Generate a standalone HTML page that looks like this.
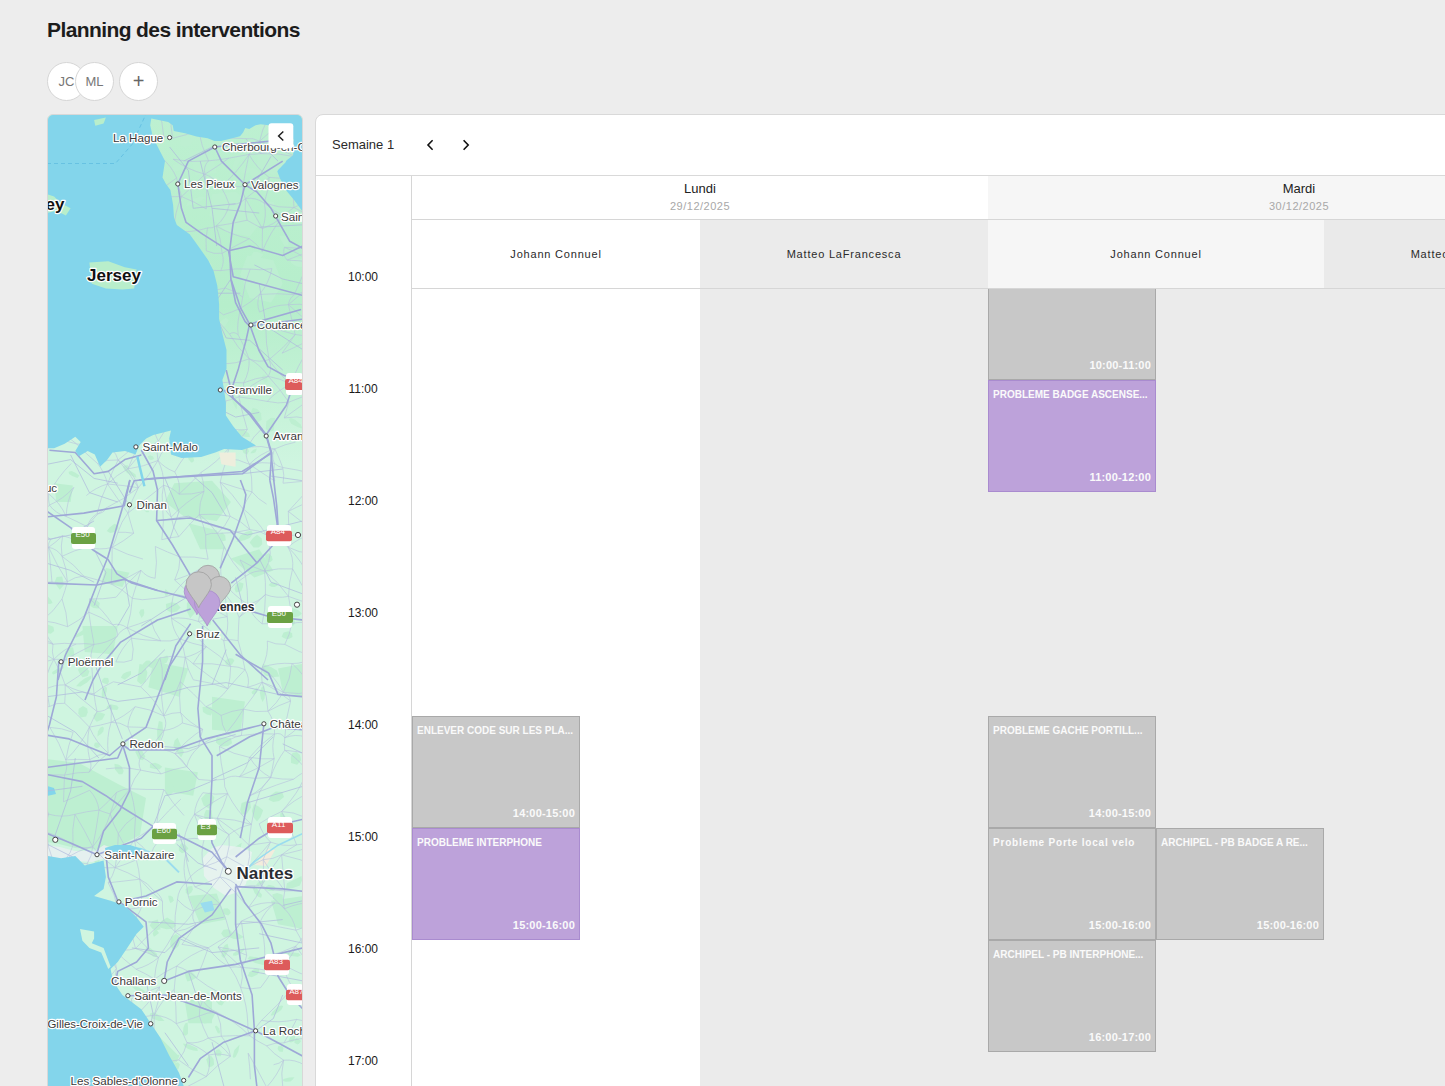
<!DOCTYPE html>
<html><head><meta charset="utf-8">
<style>
*{box-sizing:border-box;margin:0;padding:0}
html,body{width:1445px;height:1086px;overflow:hidden;background:#ededed;font-family:"Liberation Sans",sans-serif;color:#222}
.abs{position:absolute}
#title{left:47px;top:16px;font-size:21px;font-weight:700;letter-spacing:-0.6px;color:#1c1c1c;white-space:nowrap;line-height:28px}
.av{position:absolute;top:62px;width:39px;height:39px;border-radius:50%;background:#fff;border:1px solid #d6d6d6;font-size:13px;color:#777;text-align:center;line-height:37px}
#map{left:47px;top:114px;width:256px;height:990px;border-radius:6px;overflow:hidden;background:#c9f0db;border:1px solid #d8d8d8}
#card{left:315px;top:114px;width:1200px;height:1000px;background:#fff;border:1px solid #d9d9d9;border-radius:8px;overflow:hidden}
.t{position:absolute;white-space:nowrap}
.ev{position:absolute;border:1px solid #a9a9a9;background:#c8c8c8;color:#fafafa;font-weight:700}
.ev.p{background:#bda2da;border-color:#a98bcf}
.ev .n{position:absolute;left:4px;top:8px;font-size:10px;letter-spacing:0px;white-space:nowrap;line-height:11px}
.ev .h{position:absolute;right:4px;bottom:8px;font-size:11px;letter-spacing:0.2px;white-space:nowrap;line-height:12px}
</style></head><body>
<div id="title" class="abs">Planning des interventions</div>
<div class="av" style="left:47px">JC</div>
<div class="av" style="left:75px">ML</div>
<div class="av" style="left:119px;font-size:20px;color:#666">+</div>
<div id="map" class="abs">
<svg width="256" height="990" viewBox="0 0 256 990" style="position:absolute;left:-1px;top:-1px" font-family="Liberation Sans, sans-serif">
<rect width="256" height="990" fill="#cff5e0"/>
<defs><linearGradient id="cot" x1="0" y1="0" x2="0" y2="1"><stop offset="0" stop-color="#bdf0d1"/><stop offset="0.55" stop-color="#b6eecb"/><stop offset="1" stop-color="#cff5e0"/></linearGradient></defs>
<rect x="90" y="0" width="166" height="350" fill="url(#cot)"/>
<polygon points="165.0,80.2 188.6,77.8 202.7,89.6 212.2,110.8 202.7,122.6 179.2,117.9 162.7,101.4" fill="#bdefd1"/>
<polygon points="200.4,141.4 226.3,146.2 235.7,169.7 224.0,188.6 202.7,183.9 193.3,160.3" fill="#bdefd1"/>
<polygon points="132.0,132.0 150.9,132.0 165.0,150.9 150.9,165.0 136.7,153.2" fill="#bdefd1"/>
<polygon points="212.2,35.4 235.7,28.3 245.2,47.1 226.3,61.3 209.8,51.9" fill="#bdefd1"/>
<polygon points="141.4,35.4 165.0,40.1 169.7,58.9 148.5,61.3" fill="#bdefd1"/>
<polygon points="7.1,369.2 25.9,371.5 23.6,388.0 9.4,388.0" fill="#bdefd1"/>
<polygon points="127.3,369.2 165.0,366.8 183.9,388.0 169.7,406.9 136.7,402.2 117.9,388.0" fill="#bdefd1"/>
<polygon points="141.4,409.2 169.7,416.3 179.2,435.2 153.2,435.2" fill="#bdefd1"/>
<polygon points="58.9,454.0 82.5,458.7 75.4,472.9 54.2,468.2" fill="#bdefd1"/>
<polygon points="183.9,444.6 212.2,435.2 226.3,456.4 207.4,463.4" fill="#bdefd1"/>
<polygon points="35.4,256.0 94.3,256.0 99.0,270.1 47.1,274.9" fill="#bdefd1"/>
<polygon points="35.4,512.0 70.7,512.0 66.0,540.3 37.7,537.9" fill="#bdefd1"/>
<polygon points="106.1,547.4 141.4,554.4 132.0,582.7 101.4,573.3" fill="#bdefd1"/>
<polygon points="165.0,582.7 198.0,587.4 193.3,618.1 165.0,615.7" fill="#bdefd1"/>
<polygon points="14.1,677.0 58.9,674.7 77.8,700.6 70.7,724.2 23.6,724.2 9.4,700.6" fill="#bdefd1"/>
<polygon points="117.9,653.4 150.9,658.2 146.2,681.7 117.9,677.0" fill="#bdefd1"/>
<polygon points="231.0,554.4 256.0,549.7 256.0,582.7 235.7,578.0" fill="#bdefd1"/>
<polygon points="141.4,782.0 169.7,779.6 179.2,805.6 153.2,810.3" fill="#bdefd1"/>
<polygon points="136.7,881.0 165.0,885.7 165.0,909.3 141.4,909.3" fill="#bdefd1"/>
<polygon points="113.2,923.4 132.0,942.3 117.9,961.2 103.7,942.3" fill="#bdefd1"/>
<polygon points="224.0,786.7 256.0,782.0 256.0,815.0 231.0,810.3" fill="#bdefd1"/>
<polygon points="82.2,155.9 81.4,152.4 81.1,147.5 82.8,144.7 84.5,143.3 84.5,148.3 83.7,152.8" fill="#bdefd1"/>
<polygon points="106.9,822.7 105.7,819.8 106.7,816.9 108.9,814.2 110.3,816.8 112.0,819.0 109.6,821.0" fill="#bdefd1"/>
<polygon points="41.2,119.3 37.2,122.2 33.5,120.1 31.9,116.2 35.2,113.5 38.3,113.0 40.8,115.1" fill="#bdefd1"/>
<polygon points="174.8,427.5 170.8,427.4 169.3,422.8 172.1,419.9 175.5,418.5 178.2,421.6 178.8,426.4" fill="#bdefd1"/>
<polygon points="189.5,295.7 186.6,289.9 184.1,283.6 184.5,279.4 185.4,275.6 188.6,282.0 190.1,290.6" fill="#bdefd1"/>
<polygon points="222.3,317.7 218.7,315.1 219.4,307.2 224.0,303.7 228.0,303.9 227.4,310.2 226.5,316.7" fill="#bdefd1"/>
<polygon points="168.9,991.8 165.4,987.2 162.4,982.5 162.6,977.9 164.6,977.5 167.2,981.2 170.4,987.9" fill="#bdefd1"/>
<polygon points="38.1,246.4 35.3,250.3 30.0,251.3 26.8,246.5 28.1,240.8 33.3,240.4 37.2,241.9" fill="#bdefd1"/>
<polygon points="98.4,879.4 95.1,879.2 88.9,876.2 83.7,871.6 86.2,870.8 91.5,873.2 97.5,876.7" fill="#bdefd1"/>
<polygon points="94.0,570.6 90.1,566.9 91.3,559.0 92.5,550.1 97.4,551.0 100.4,558.4 98.6,567.8" fill="#bdefd1"/>
<polygon points="102.8,395.5 101.6,398.2 99.2,398.3 97.4,396.2 98.6,393.2 100.5,391.9 102.6,392.6" fill="#bdefd1"/>
<polygon points="25.2,362.0 22.0,360.1 21.6,357.7 24.7,357.0 28.4,358.8 32.4,361.6 30.5,364.1" fill="#bdefd1"/>
<polygon points="120.6,481.4 118.6,482.1 117.5,479.3 117.7,477.5 118.6,475.1 120.9,477.3 121.2,479.7" fill="#bdefd1"/>
<polygon points="132.6,29.7 134.3,24.5 138.0,21.3 142.3,23.0 146.4,26.8 142.9,31.6 137.1,33.7" fill="#bdefd1"/>
<polygon points="75.5,225.2 76.3,218.5 83.3,213.8 89.0,216.1 92.4,219.8 88.3,224.9 82.6,225.4" fill="#bdefd1"/>
<polygon points="2.9,277.2 3.0,272.4 7.6,270.4 11.9,273.3 11.0,278.0 8.5,280.3 5.3,280.0" fill="#bdefd1"/>
<polygon points="44.3,205.6 43.8,200.4 48.8,195.7 53.6,198.5 57.7,201.4 55.4,207.5 48.4,209.4" fill="#bdefd1"/>
<polygon points="194.3,477.2 189.0,478.6 187.5,474.9 188.6,471.5 192.3,467.9 196.5,469.5 195.8,473.3" fill="#bdefd1"/>
<polygon points="42.2,154.4 36.7,157.7 28.1,153.7 25.0,148.3 26.1,143.8 32.9,145.4 37.3,148.8" fill="#bdefd1"/>
<polygon points="250.2,650.8 244.1,649.0 243.8,643.0 245.5,638.9 249.7,637.9 253.0,641.0 254.1,646.2" fill="#bdefd1"/>
<polygon points="67.9,417.9 63.2,419.0 59.7,417.0 62.9,413.2 67.4,409.8 71.1,411.6 71.5,414.8" fill="#bdefd1"/>
<polygon points="140.8,18.6 136.8,20.1 132.7,20.9 128.1,19.7 128.7,17.3 132.9,16.3 137.6,16.5" fill="#bdefd1"/>
<polygon points="144.3,778.5 141.2,780.9 138.8,778.8 138.6,775.6 141.2,772.4 145.2,772.1 145.9,775.6" fill="#bdefd1"/>
<polygon points="157.8,506.8 153.7,504.8 150.7,499.6 153.6,494.6 158.3,493.3 162.4,497.9 160.4,503.3" fill="#bdefd1"/>
<polygon points="150.8,936.9 146.3,936.5 141.1,935.0 137.8,932.4 135.8,929.6 142.2,930.5 150.2,934.2" fill="#bdefd1"/>
<polygon points="30.8,712.3 35.5,708.9 40.4,705.4 44.9,705.9 45.9,707.6 42.6,711.0 35.2,713.0" fill="#bdefd1"/>
<polygon points="45.8,430.4 43.3,432.1 39.3,428.4 35.8,425.0 37.7,423.0 41.8,424.9 45.5,427.4" fill="#bdefd1"/>
<polygon points="156.6,509.6 156.4,505.2 157.1,502.8 160.1,504.5 164.2,507.6 163.3,510.8 160.8,510.9" fill="#bdefd1"/>
<polygon points="117.5,907.1 111.9,906.9 104.8,904.2 102.7,900.6 103.7,899.0 107.7,898.6 113.5,902.6" fill="#bdefd1"/>
<polygon points="26.9,931.2 20.9,932.7 15.0,934.5 12.0,929.5 13.5,925.5 18.3,923.4 25.3,925.4" fill="#bdefd1"/>
<polygon points="73.3,129.6 70.7,130.4 66.8,129.6 63.5,127.2 64.2,125.2 68.1,124.4 72.4,127.3" fill="#bdefd1"/>
<polygon points="130.5,178.6 129.4,179.8 125.9,176.6 125.0,174.0 125.4,172.4 128.6,173.5 130.5,177.0" fill="#bdefd1"/>
<polygon points="211.7,433.6 206.6,433.4 202.6,428.5 206.0,423.9 210.1,420.7 214.8,424.4 215.3,430.2" fill="#bdefd1"/>
<polygon points="107.0,344.8 104.8,345.9 102.7,345.7 101.5,344.4 100.7,342.2 103.4,341.2 106.1,342.6" fill="#bdefd1"/>
<polygon points="76.2,241.9 73.2,243.2 68.7,243.3 66.4,239.1 69.2,236.3 72.9,236.7 77.3,238.2" fill="#bdefd1"/>
<polygon points="79.5,355.6 77.2,354.5 75.9,352.7 78.1,351.5 80.3,350.9 81.7,352.4 81.9,354.4" fill="#bdefd1"/>
<polygon points="9.4,26.9 7.3,24.9 8.1,20.4 10.6,17.2 13.5,17.6 13.3,22.0 11.8,25.3" fill="#bdefd1"/>
<polygon points="261.3,149.2 257.4,153.2 249.6,152.5 243.9,149.1 244.2,144.5 251.3,144.4 257.4,145.0" fill="#bdefd1"/>
<polygon points="126.4,836.5 123.1,830.9 124.0,823.1 128.9,820.1 132.1,822.0 133.4,826.3 131.6,832.1" fill="#bdefd1"/>
<polygon points="24.0,834.2 22.1,829.8 24.5,825.4 27.4,820.1 31.6,822.1 31.5,827.8 28.6,832.7" fill="#bdefd1"/>
<polygon points="175.2,66.9 173.6,69.2 166.9,67.3 160.6,64.9 160.3,61.7 167.7,62.3 173.6,64.4" fill="#bdefd1"/>
<polygon points="120.1,682.1 118.5,679.2 120.0,673.9 124.2,668.4 126.9,671.9 127.5,677.1 123.3,681.0" fill="#bdefd1"/>
<polygon points="12.2,271.5 9.9,268.0 12.5,262.3 17.2,259.5 19.5,262.6 21.5,267.4 16.2,270.8" fill="#bdefd1"/>
<polygon points="247.4,928.8 247.5,925.4 249.2,924.0 251.4,924.7 254.2,927.0 252.4,929.2 250.5,930.5" fill="#bdefd1"/>
<polygon points="28.4,523.8 29.0,520.8 36.9,515.4 41.7,514.4 45.8,514.3 39.2,519.6 33.5,522.1" fill="#bdefd1"/>
<polygon points="5.6,489.0 2.9,490.1 -2.0,489.4 -2.7,486.1 -3.9,482.8 1.1,482.8 4.2,486.3" fill="#bdefd1"/>
<polygon points="240.4,713.6 237.2,713.8 233.5,705.2 233.2,699.6 235.3,698.3 238.8,703.3 240.3,708.9" fill="#bdefd1"/>
<polygon points="28.8,829.1 24.8,831.6 22.2,829.0 21.7,825.3 24.5,820.2 30.1,820.4 32.3,824.9" fill="#bdefd1"/>
<polygon points="157.3,909.4 154.5,907.0 159.7,900.3 166.0,895.5 168.8,898.6 165.3,905.2 160.7,908.9" fill="#bdefd1"/>
<polygon points="241.3,131.5 237.4,131.9 234.4,126.7 232.5,122.2 235.5,121.5 239.1,123.0 241.2,127.4" fill="#bdefd1"/>
<polygon points="42.9,163.4 37.3,163.3 35.5,158.9 40.4,156.5 44.7,157.2 47.3,159.3 46.2,161.9" fill="#bdefd1"/>
<polygon points="86.4,95.4 84.3,92.6 85.1,88.7 87.2,86.4 89.6,86.6 90.3,89.9 89.0,93.0" fill="#bdefd1"/>
<polygon points="15.8,284.9 13.6,281.9 14.1,273.0 15.1,267.5 16.8,267.6 18.0,272.8 17.6,280.4" fill="#bdefd1"/>
<polygon points="254.0,841.2 250.8,842.7 242.1,841.8 235.9,840.2 238.9,839.1 242.6,838.3 251.3,839.1" fill="#bdefd1"/>
<polygon points="218.3,849.4 216.2,851.0 208.1,849.0 200.6,844.7 202.7,842.3 210.2,843.3 218.7,846.8" fill="#bdefd1"/>
<polygon points="119.8,548.4 115.6,550.6 113.7,548.9 114.4,545.9 116.7,543.1 120.2,541.4 121.6,544.0" fill="#bdefd1"/>
<polygon points="30.5,74.5 26.8,74.8 25.6,69.7 25.5,65.5 28.5,63.8 33.2,66.1 33.6,72.4" fill="#bdefd1"/>
<polygon points="221.5,471.1 223.7,468.9 226.7,468.6 229.9,468.9 230.6,471.4 227.5,473.0 224.2,472.7" fill="#bdefd1"/>
<polygon points="172.8,919.4 170.8,919.3 169.2,916.0 167.8,912.5 169.5,911.6 172.0,914.2 172.9,917.2" fill="#bdefd1"/>
<polygon points="255.8,314.8 250.6,313.0 244.2,309.7 241.7,304.7 244.3,304.0 248.5,305.9 253.4,310.2" fill="#bdefd1"/>
<polygon points="174.0,942.2 170.4,942.0 168.4,940.8 167.8,938.7 168.8,936.3 172.1,935.3 174.6,938.4" fill="#bdefd1"/>
<polygon points="197.3,994.0 191.5,993.6 185.2,988.6 179.1,983.8 181.9,982.3 187.6,984.1 193.1,988.5" fill="#bdefd1"/>
<polygon points="39.9,3.3 39.2,0.1 43.8,0.1 46.9,1.0 48.5,3.8 45.1,6.5 41.0,5.7" fill="#bdefd1"/>
<polygon points="16.5,471.5 12.7,475.7 9.7,471.5 7.6,468.1 9.7,463.1 15.2,462.6 16.3,467.4" fill="#bdefd1"/>
<polygon points="1.0,70.0 3.9,64.2 8.4,59.0 15.2,53.3 16.0,56.6 11.8,62.4 6.2,68.3" fill="#bdefd1"/>
<polygon points="78.2,273.6 77.7,268.5 80.5,269.4 82.5,270.6 83.9,274.3 83.4,278.8 80.3,278.3" fill="#bdefd1"/>
<polygon points="94.6,249.5 94.1,245.9 99.4,243.9 104.4,245.2 105.2,249.1 101.2,252.2 96.5,251.9" fill="#bdefd1"/>
<polygon points="89.4,363.7 84.5,361.8 79.9,358.7 77.2,355.8 76.2,353.1 81.6,355.8 88.4,360.3" fill="#bdefd1"/>
<polygon points="230.4,979.3 228.6,980.7 224.7,979.6 222.7,977.7 222.8,976.0 225.8,975.5 229.7,977.1" fill="#bdefd1"/>
<polygon points="185.9,841.6 186.4,839.2 191.8,836.0 197.6,833.9 196.5,836.7 193.6,839.5 188.9,841.7" fill="#bdefd1"/>
<polygon points="42.1,883.6 38.2,880.1 36.4,875.0 35.4,869.1 38.6,868.6 42.5,872.2 42.0,877.7" fill="#bdefd1"/>
<polygon points="128.9,811.8 125.1,814.8 119.5,815.2 111.3,812.9 113.9,807.3 120.1,803.5 126.9,807.4" fill="#bdefd1"/>
<polygon points="218.4,445.2 218.1,440.9 221.9,439.1 224.7,442.3 225.7,446.0 223.1,448.3 220.1,448.2" fill="#bdefd1"/>
<polygon points="71.7,593.7 70.2,595.9 63.9,595.4 59.5,594.2 60.0,592.3 63.5,590.3 69.9,591.5" fill="#bdefd1"/>
<polygon points="14.5,104.0 12.8,101.7 12.6,97.2 16.6,95.5 19.4,97.2 19.9,100.9 18.2,106.1" fill="#bdefd1"/>
<polygon points="73.8,563.6 76.2,559.7 79.6,557.9 84.0,557.1 83.9,560.4 81.7,562.7 77.8,565.7" fill="#bdefd1"/>
<polygon points="109.0,816.4 105.7,814.9 102.7,811.6 105.2,807.2 110.8,805.6 112.4,810.8 113.6,815.2" fill="#bdefd1"/>
<polygon points="94.6,504.0 93.1,501.0 92.1,498.4 93.7,495.4 96.9,495.3 97.3,498.9 96.6,501.3" fill="#bdefd1"/>
<polygon points="236.0,967.1 236.4,965.0 242.3,963.4 247.5,963.3 245.7,965.5 243.5,967.6 238.7,967.7" fill="#bdefd1"/>
<polygon points="109.7,842.9 106.4,842.8 100.7,838.6 98.5,834.9 99.2,833.1 103.7,834.3 110.2,840.1" fill="#bdefd1"/>
<polygon points="5.3,559.7 5.2,557.9 11.2,554.2 16.8,552.2 16.4,554.3 12.8,557.5 6.7,560.6" fill="#bdefd1"/>
<polygon points="115.2,652.7 112.3,655.4 107.7,655.1 102.8,653.7 103.0,649.9 108.0,648.7 112.0,650.2" fill="#bdefd1"/>
<polygon points="124.4,107.0 122.5,109.4 119.9,108.3 117.4,106.7 119.2,104.2 121.4,101.9 124.6,103.5" fill="#bdefd1"/>
<polygon points="126.3,54.5 125.8,51.2 132.0,49.1 137.0,51.1 137.8,54.4 132.4,56.2 126.5,57.9" fill="#bdefd1"/>
<polygon points="116.9,954.2 121.8,948.5 126.0,944.2 132.6,940.3 131.5,943.8 129.8,947.9 123.1,951.4" fill="#bdefd1"/>
<polygon points="212.9,145.3 209.1,148.1 204.8,145.4 204.6,141.2 206.5,137.9 210.6,138.0 216.2,140.5" fill="#bdefd1"/>
<polygon points="177.6,887.8 174.9,891.5 171.6,890.5 169.1,887.6 171.5,883.0 175.0,881.2 178.5,882.8" fill="#bdefd1"/>
<polygon points="22.0,986.6 20.1,983.6 26.0,979.2 30.6,978.5 33.8,980.1 29.9,984.8 25.3,986.8" fill="#bdefd1"/>
<polygon points="185.7,57.7 185.9,51.8 188.4,44.6 192.2,41.3 193.3,43.5 192.7,47.5 190.2,52.2" fill="#bdefd1"/>
<polygon points="162.4,430.0 159.6,434.1 155.3,431.1 153.5,427.9 154.0,423.8 158.4,423.7 162.6,425.6" fill="#bdefd1"/>
<polygon points="54.9,583.9 54.7,580.1 55.1,574.7 58.5,572.7 60.0,573.7 59.6,577.4 57.8,582.8" fill="#bdefd1"/>
<polygon points="229.0,774.5 226.5,776.8 221.9,776.9 217.7,775.5 218.4,772.9 221.6,770.7 227.0,771.9" fill="#bdefd1"/>
<polygon points="64.3,896.8 61.8,896.4 58.9,895.1 61.9,893.1 64.6,891.3 68.2,892.2 66.4,895.1" fill="#bdefd1"/>
<polygon points="47.0,604.7 46.5,601.3 49.9,598.1 53.6,598.6 58.2,600.2 55.3,605.5 49.7,607.8" fill="#bdefd1"/>
<polygon points="-3.6,841.5 -2.9,837.2 0.5,833.1 4.7,830.8 5.9,833.2 5.1,837.1 0.2,842.4" fill="#bdefd1"/>
<polygon points="176.7,844.1 174.4,842.0 175.4,834.7 177.9,830.9 180.6,829.8 181.9,835.3 179.1,841.0" fill="#bdefd1"/>
<polygon points="221.3,19.2 221.3,15.6 224.2,12.8 227.7,10.5 228.5,13.2 227.5,16.1 224.8,19.5" fill="#bdefd1"/>
<polygon points="162.3,694.7 156.7,691.5 154.1,684.6 158.4,679.9 163.7,678.2 167.4,683.6 166.0,689.5" fill="#bdefd1"/>
<polygon points="56.3,617.4 54.1,620.1 50.3,622.4 51.0,617.3 53.1,613.7 55.5,612.6 56.9,614.1" fill="#bdefd1"/>
<polygon points="185.1,629.2 180.8,631.9 174.2,632.8 168.8,628.4 169.6,623.2 176.8,623.8 183.9,624.0" fill="#bdefd1"/>
<polygon points="236.3,935.7 235.6,938.1 232.2,937.5 230.6,934.9 231.1,932.3 234.3,932.0 236.4,933.8" fill="#bdefd1"/>
<polygon points="29.6,103.2 26.2,100.6 22.9,96.8 21.4,92.2 22.3,89.3 26.7,94.2 29.5,99.6" fill="#bdefd1"/>
<polygon points="254.9,499.5 251.6,502.5 244.1,503.5 239.7,499.8 238.3,495.7 245.3,494.1 251.4,496.3" fill="#bdefd1"/>
<polygon points="227.5,90.0 226.8,92.3 218.3,93.1 215.5,90.7 213.2,88.9 218.9,87.6 226.9,87.7" fill="#bdefd1"/>
<polygon points="51.7,494.4 46.4,494.1 43.5,491.9 41.8,487.7 45.8,484.7 49.6,486.3 52.9,489.0" fill="#bdefd1"/>
<polygon points="18.0,786.3 15.5,782.6 17.0,776.8 21.4,771.2 24.2,776.1 27.3,780.6 22.0,784.2" fill="#bdefd1"/>
<polygon points="56.9,270.9 52.1,265.8 48.6,260.2 48.1,253.6 51.2,251.2 56.1,256.8 58.1,265.0" fill="#bdefd1"/>
<polygon points="87.1,327.1 85.4,323.4 85.1,320.2 88.7,318.6 93.1,321.5 93.1,324.8 91.7,327.4" fill="#bdefd1"/>
<polygon points="223.7,239.4 223.9,236.0 225.1,233.6 227.5,232.5 229.4,233.7 229.6,236.6 226.9,238.2" fill="#bdefd1"/>
<polygon points="95.6,191.2 87.3,191.5 80.7,191.0 72.6,186.5 75.2,181.8 83.4,181.4 90.5,185.6" fill="#bdefd1"/>
<polygon points="51.0,633.8 49.1,634.1 47.0,631.8 47.8,628.8 50.3,628.4 52.6,629.9 52.8,632.8" fill="#bdefd1"/>
<polygon points="31.3,599.2 31.7,594.8 36.0,591.9 40.2,594.4 40.7,598.2 39.2,602.6 33.6,603.5" fill="#bdefd1"/>
<polygon points="194.6,700.6 193.2,695.9 194.6,689.1 199.3,687.2 203.1,687.3 204.0,693.4 199.3,700.4" fill="#bdefd1"/>
<polygon points="159.2,252.5 156.7,249.9 157.5,244.4 161.5,243.3 164.9,243.1 165.7,247.8 162.5,251.6" fill="#bdefd1"/>
<polygon points="128.4,966.5 125.4,969.6 122.9,968.1 123.0,965.1 123.9,961.9 126.8,960.9 129.0,962.7" fill="#bdefd1"/>
<polygon points="134.1,643.2 129.8,637.7 126.3,632.1 127.6,626.5 130.6,623.8 133.6,630.7 137.0,638.3" fill="#bdefd1"/>
<polygon points="95.3,56.2 93.6,58.8 89.7,59.8 87.2,57.3 87.6,54.6 90.3,53.2 94.4,53.0" fill="#bdefd1"/>
<polygon points="241.8,525.0 238.3,524.7 234.6,522.8 236.6,518.5 241.6,517.2 245.1,519.3 245.5,522.9" fill="#bdefd1"/>
<polygon points="52.7,957.5 53.4,953.0 56.6,950.4 60.7,950.0 61.6,953.6 61.9,958.0 57.2,958.5" fill="#bdefd1"/>
<polygon points="218.7,268.9 216.8,267.3 214.4,264.2 215.8,261.0 217.9,260.6 219.9,263.2 220.7,267.4" fill="#bdefd1"/>
<polygon points="101.1,632.9 106.1,629.8 110.7,626.7 117.3,627.3 117.6,630.9 111.5,633.1 105.1,635.2" fill="#bdefd1"/>
<polygon points="161.0,16.8 158.4,14.3 158.4,12.3 161.2,12.0 166.1,13.7 166.9,16.8 164.7,17.7" fill="#bdefd1"/>
<polygon points="230.0,788.0 226.0,784.6 225.3,780.5 230.1,779.0 235.6,780.8 235.9,784.6 235.2,787.9" fill="#bdefd1"/>
<polygon points="135.0,739.3 131.8,736.8 131.9,732.8 134.4,729.0 138.3,731.1 141.4,734.2 138.8,737.8" fill="#bdefd1"/>
<polygon points="133.6,493.4 129.6,497.5 124.2,498.8 119.4,495.7 118.9,490.1 124.6,488.2 129.7,489.2" fill="#bdefd1"/>
<polygon points="253.5,75.3 250.5,79.0 243.4,80.1 240.1,75.9 237.9,71.3 244.7,70.1 250.6,71.5" fill="#bdefd1"/>
<polygon points="234.3,41.8 229.1,38.9 225.2,34.2 224.6,28.4 227.8,25.4 232.2,30.6 234.9,35.9" fill="#bdefd1"/>
<polygon points="101.4,552.6 102.4,549.2 108.2,545.5 114.0,543.4 117.4,544.9 111.6,550.2 104.3,554.1" fill="#bdefd1"/>
<polygon points="82.4,319.0 81.7,314.8 80.8,310.9 84.8,308.2 88.3,310.7 87.8,314.5 86.3,317.5" fill="#bdefd1"/>
<polygon points="-3.5,197.5 -5.6,192.2 -1.4,183.9 4.0,179.3 7.6,181.3 6.9,188.3 1.9,195.1" fill="#bdefd1"/>
<polygon points="170.3,214.1 170.1,211.1 173.4,207.7 178.7,203.7 181.8,206.3 178.4,212.1 173.1,215.2" fill="#bdefd1"/>
<polygon points="214.2,783.7 211.1,782.8 207.6,779.1 205.7,774.2 207.5,771.6 211.6,776.6 215.0,780.8" fill="#bdefd1"/>
<polygon points="2.3,119.7 6.0,116.3 10.8,113.5 17.2,113.8 19.9,117.5 13.8,122.3 6.0,122.1" fill="#bdefd1"/>
<polygon points="110.0,103.3 107.6,103.7 102.7,102.8 100.8,99.6 98.9,95.9 105.4,98.8 111.6,101.2" fill="#bdefd1"/>
<polygon points="28.9,22.2 29.6,19.1 32.0,14.0 37.2,10.9 39.8,12.3 36.7,18.2 31.9,21.3" fill="#bdefd1"/>
<polygon points="166.2,707.6 160.1,708.7 157.5,704.2 157.1,700.7 158.9,696.1 164.7,696.3 165.2,701.7" fill="#bdefd1"/>
<polygon points="79.7,724.9 75.8,724.5 74.0,721.5 77.2,719.0 82.1,718.2 83.8,721.3 84.9,724.7" fill="#bdefd1"/>
<polygon points="95.9,646.2 91.6,645.0 88.5,638.2 89.2,632.8 92.3,632.8 95.0,636.5 98.4,642.5" fill="#bdefd1"/>
<polygon points="174.1,819.6 176.5,815.7 180.7,815.3 184.2,817.0 185.7,821.1 181.3,823.0 176.9,823.2" fill="#bdefd1"/>
<polygon points="161.1,887.2 159.0,889.4 152.1,890.2 145.1,888.7 144.8,885.5 152.8,885.1 160.3,884.4" fill="#bdefd1"/>
<polygon points="200.7,862.1 202.5,858.3 207.8,854.5 212.1,855.1 212.2,857.4 210.5,860.5 204.7,863.2" fill="#bdefd1"/>
<polygon points="48.0,752.3 47.5,747.3 49.8,740.4 52.6,735.8 55.8,734.1 55.1,741.5 51.5,748.6" fill="#bdefd1"/>
<polygon points="20.0,808.2 18.3,803.9 20.2,796.1 23.1,791.3 25.6,791.4 24.9,797.7 23.1,802.9" fill="#bdefd1"/>
<polygon points="47.8,699.0 44.6,697.2 43.2,694.2 42.1,689.0 46.6,689.5 48.9,692.3 50.7,696.3" fill="#bdefd1"/>
<polygon points="201.3,159.3 199.6,157.5 197.5,152.4 200.3,147.0 203.3,148.6 205.0,153.2 203.5,158.3" fill="#bdefd1"/>
<polygon points="189.4,428.1 193.5,421.5 198.8,417.9 204.2,416.5 206.0,419.6 202.7,424.0 197.5,426.3" fill="#bdefd1"/>
<polygon points="138.6,863.1 137.6,858.3 142.4,856.5 146.0,859.0 150.1,863.2 145.1,866.3 140.4,867.6" fill="#bdefd1"/>
<polygon points="164.9,952.5 161.5,953.2 159.3,945.5 161.9,941.7 164.3,942.1 166.6,945.0 167.1,950.5" fill="#bdefd1"/>
<polygon points="223.6,901.5 225.5,897.8 231.5,892.0 235.0,891.6 236.2,892.3 234.2,895.9 227.0,901.3" fill="#bdefd1"/>
<polygon points="179.0,297.8 175.6,300.1 171.0,299.0 166.9,295.9 169.3,292.6 173.4,291.5 177.4,294.0" fill="#bdefd1"/>
<polygon points="183.1,13.6 177.2,14.6 171.0,15.5 164.9,12.9 165.1,10.1 172.4,10.4 178.3,11.1" fill="#bdefd1"/>
<polygon points="26.0,927.1 21.6,926.4 20.3,918.3 21.5,911.6 25.4,913.4 28.2,917.4 27.9,922.9" fill="#bdefd1"/>
<polygon points="185.0,550.4 181.4,551.4 178.8,550.4 177.9,546.8 182.4,544.2 185.5,544.5 187.4,546.6" fill="#bdefd1"/>
<polygon points="85.6,894.9 82.8,899.7 80.0,898.8 78.0,896.1 79.2,891.4 81.7,889.1 83.8,890.7" fill="#bdefd1"/>
<polygon points="101.2,983.6 98.7,988.8 90.6,984.5 83.0,980.9 86.7,976.8 92.8,973.3 98.2,979.4" fill="#bdefd1"/>
<polygon points="203.4,339.3 204.5,337.5 206.4,335.7 209.7,334.6 209.2,336.7 208.2,338.6 205.6,339.3" fill="#bdefd1"/>
<polygon points="51.6,764.1 50.5,766.1 43.9,764.8 40.2,762.2 40.9,760.5 45.0,759.7 51.9,761.8" fill="#bdefd1"/>
<polygon points="205.2,579.9 204.5,578.0 207.1,575.7 209.9,573.2 210.5,575.2 210.3,577.9 207.2,580.7" fill="#bdefd1"/>
<polygon points="119.1,18.3 121.1,14.8 126.7,10.2 132.5,11.0 132.6,14.0 129.3,17.7 122.0,20.5" fill="#bdefd1"/>
<polygon points="7.2,517.0 3.8,519.7 -2.1,518.5 -3.7,514.4 -3.5,510.6 1.4,510.8 6.4,512.8" fill="#bdefd1"/>
<polygon points="15.3,873.5 12.3,869.9 13.1,862.5 13.9,853.1 17.4,857.2 18.8,862.5 17.8,868.5" fill="#bdefd1"/>
<polygon points="62.8,810.8 62.4,809.3 62.7,807.1 64.9,806.2 66.4,807.4 66.5,809.8 64.4,810.8" fill="#bdefd1"/>
<polygon points="222.7,712.9 221.1,711.5 220.9,709.5 221.6,707.5 223.3,707.9 224.9,709.2 224.8,712.1" fill="#bdefd1"/>
<polygon points="29.1,572.3 32.9,567.9 37.9,564.3 44.3,561.5 44.4,564.3 40.3,568.2 33.6,572.5" fill="#bdefd1"/>
<polygon points="200.0,340.7 196.6,338.9 194.8,334.8 196.3,330.9 199.6,330.2 201.0,334.0 201.9,337.3" fill="#bdefd1"/>
<polygon points="243.6,928.6 241.5,926.4 243.2,923.3 245.4,920.9 248.2,922.0 247.7,925.4 246.3,927.8" fill="#bdefd1"/>
<polygon points="238.8,775.2 239.9,769.2 247.7,765.4 254.5,762.0 255.0,766.2 252.9,771.6 245.9,774.1" fill="#bdefd1"/>
<polygon points="138.4,921.8 135.6,920.5 136.5,913.6 138.1,909.6 140.6,908.4 141.0,914.1 140.9,919.9" fill="#bdefd1"/>
<polygon points="244.4,512.1 242.3,510.5 242.0,507.6 243.7,505.0 246.7,505.0 248.0,508.1 247.0,511.2" fill="#bdefd1"/>
<polygon points="20.5,549.9 18.8,544.4 18.2,537.7 22.3,533.2 26.1,533.6 27.4,539.9 24.7,546.7" fill="#bdefd1"/>
<polygon points="81.1,243.9 78.1,242.3 75.9,240.3 75.8,236.3 79.7,236.4 82.9,237.5 83.3,241.1" fill="#bdefd1"/>
<polygon points="75.9,979.3 73.7,983.7 69.7,981.4 69.5,977.6 70.4,973.9 74.3,972.9 78.1,975.2" fill="#bdefd1"/>
<polygon points="35.4,226.8 31.0,228.5 23.4,226.6 18.9,220.8 20.1,215.8 28.5,216.6 35.0,222.2" fill="#bdefd1"/>
<polygon points="182.1,741.5 181.9,736.8 188.4,732.8 194.7,728.7 193.7,733.7 193.5,738.0 187.0,741.6" fill="#bdefd1"/>
<polygon points="121.1,958.3 122.1,953.6 126.5,949.8 131.0,948.3 132.9,950.6 131.3,955.2 126.2,957.3" fill="#bdefd1"/>
<polygon points="94.9,553.8 95.9,549.9 99.1,546.8 102.3,546.6 104.1,548.1 102.2,551.1 98.9,554.0" fill="#bdefd1"/>
<polygon points="139.2,92.2 141.0,87.7 149.1,84.1 155.1,82.2 158.8,83.7 151.1,88.3 146.2,90.5" fill="#bdefd1"/>
<polygon points="143.2,504.2 139.9,497.5 139.8,489.7 143.3,483.0 147.6,485.1 149.4,491.1 148.1,498.8" fill="#bdefd1"/>
<polygon points="96.3,940.5 93.1,942.6 87.0,941.8 82.7,938.0 82.7,933.8 89.4,932.9 95.2,936.8" fill="#bdefd1"/>
<polygon points="111.6,629.8 110.2,622.9 110.1,616.2 111.9,607.0 115.4,608.1 116.1,616.5 114.2,623.0" fill="#bdefd1"/>
<polygon points="221.5,685.7 223.9,680.9 228.7,677.6 235.2,677.9 237.0,682.9 232.0,686.9 226.4,688.0" fill="#bdefd1"/>
<polygon points="159.8,600.4 156.0,598.0 155.5,593.0 160.9,592.5 166.1,593.7 165.4,598.1 163.9,601.4" fill="#bdefd1"/>
<polygon points="215.6,587.9 213.9,584.2 212.8,578.6 214.4,573.6 217.0,571.7 218.2,578.6 217.5,584.6" fill="#bdefd1"/>
<polygon points="37.1,157.2 35.3,158.4 28.3,157.0 23.5,153.8 23.3,151.5 30.4,153.3 34.7,155.1" fill="#bdefd1"/>
<polygon points="202.9,322.9 199.4,323.1 193.4,322.0 190.3,317.2 192.6,315.3 197.4,316.1 202.3,319.8" fill="#bdefd1"/>
<polygon points="15.4,888.7 10.8,885.8 9.7,881.4 9.3,874.7 15.7,873.8 18.8,879.4 20.7,885.7" fill="#bdefd1"/>
<polygon points="209.0,309.4 205.0,304.3 203.5,299.3 205.8,293.7 210.9,295.5 214.0,299.2 214.7,305.8" fill="#bdefd1"/>
<polygon points="125.5,788.0 123.2,789.1 121.7,785.0 121.2,781.7 123.5,781.8 125.8,782.9 126.7,786.3" fill="#bdefd1"/>
<polygon points="104.5,67.4 101.0,67.9 98.9,66.2 100.3,63.3 103.7,62.1 108.0,61.4 107.5,64.8" fill="#bdefd1"/>
<polygon points="37.7,700.1 37.1,697.9 39.0,695.4 42.2,695.8 42.4,698.5 41.8,700.7 39.2,702.2" fill="#bdefd1"/>
<polygon points="96.4,952.2 92.0,951.2 92.1,948.1 93.7,944.6 98.7,945.7 103.7,947.8 101.3,951.6" fill="#bdefd1"/>
<polygon points="89.4,245.8 89.4,243.5 94.6,240.7 98.7,240.8 101.4,242.2 96.5,245.5 90.8,247.7" fill="#bdefd1"/>
<polygon points="150.9,311.1 147.1,310.5 143.0,308.9 141.9,306.4 141.6,304.2 145.4,305.5 149.0,308.0" fill="#bdefd1"/>
<polygon points="81.1,67.4 77.7,68.0 74.1,67.2 70.4,64.5 71.9,62.0 76.1,61.7 80.4,64.2" fill="#bdefd1"/>
<polygon points="32.6,276.0 30.0,273.5 29.8,270.7 33.2,270.1 36.4,272.7 39.1,275.8 36.0,276.8" fill="#bdefd1"/>
<polygon points="158.4,182.7 157.6,178.8 158.4,176.8 161.2,176.7 164.2,179.3 165.1,182.6 162.7,184.1" fill="#bdefd1"/>
<polygon points="3.6,311.4 4.6,308.3 10.2,305.3 14.9,303.9 16.9,305.4 12.4,309.1 8.0,310.5" fill="#bdefd1"/>
<polygon points="209.1,770.9 211.2,768.6 213.6,766.9 216.1,766.7 218.4,767.4 215.0,769.7 211.2,772.0" fill="#bdefd1"/>
<polygon points="185.5,91.7 187.4,86.5 191.0,82.6 196.6,77.8 197.4,81.7 196.4,86.8 190.4,91.1" fill="#bdefd1"/>
<polygon points="196.9,823.0 192.7,825.1 186.9,825.0 180.8,822.4 184.5,819.6 188.0,817.2 192.5,820.2" fill="#bdefd1"/>
<polygon points="175.1,798.1 176.7,794.6 180.4,794.2 182.7,796.1 183.7,799.0 181.2,801.4 177.9,800.5" fill="#bdefd1"/>
<polygon points="84.2,139.5 80.5,141.1 75.3,137.3 71.4,131.2 76.2,129.6 81.1,131.3 86.9,135.8" fill="#bdefd1"/>
<polygon points="35.5,563.3 32.7,559.6 30.8,555.6 34.6,552.6 39.2,553.7 42.5,557.3 40.7,562.1" fill="#bdefd1"/>
<polygon points="33.7,287.3 31.5,288.6 27.5,289.1 24.7,286.7 26.0,284.9 28.7,284.0 32.8,285.0" fill="#bdefd1"/>
<polygon points="89.3,166.5 91.5,165.4 93.7,164.4 96.6,165.3 95.9,167.2 93.5,167.7 91.0,167.9" fill="#bdefd1"/>
<polygon points="104.4,189.7 106.6,187.5 112.4,185.3 117.1,185.5 116.1,187.3 112.7,189.0 108.4,189.7" fill="#bdefd1"/>
<polygon points="14.8,771.8 10.9,772.7 3.0,768.5 1.4,764.2 0.4,760.4 7.2,762.4 13.7,767.8" fill="#bdefd1"/>
<polygon points="87.1,190.6 83.5,188.0 79.3,182.1 80.0,177.4 82.4,177.4 85.8,179.6 88.3,186.8" fill="#bdefd1"/>
<polygon points="210.0,707.5 206.3,703.0 204.8,696.9 207.0,690.1 211.6,692.5 216.2,696.2 213.6,702.9" fill="#bdefd1"/>
<polygon points="114.0,962.7 112.2,962.7 112.1,959.9 111.8,956.8 113.8,956.4 115.5,958.9 115.2,961.7" fill="#bdefd1"/>
<polygon points="75.4,660.2 71.9,660.3 68.0,655.6 67.4,649.8 71.4,650.5 74.6,652.5 76.7,657.0" fill="#bdefd1"/>
<polygon points="146.3,347.9 144.1,348.5 141.4,345.0 140.9,341.5 142.8,340.0 145.9,342.2 147.1,346.0" fill="#bdefd1"/>
<polygon points="212.2,65.6 207.6,66.8 203.3,60.6 201.7,54.8 205.5,53.8 209.9,55.9 214.5,61.4" fill="#bdefd1"/>
<polygon points="15.0,189.1 10.5,190.6 4.5,190.2 0.7,186.8 1.0,183.6 6.5,182.9 12.0,185.5" fill="#bdefd1"/>
<polygon points="39.5,182.5 32.7,182.9 26.8,181.0 21.0,177.6 23.5,174.9 28.8,174.3 35.8,177.5" fill="#bdefd1"/>
<polygon points="57.3,569.4 54.6,568.1 55.4,565.7 57.2,563.7 61.1,563.9 62.1,567.3 60.7,570.3" fill="#bdefd1"/>
<polygon points="204.7,117.1 197.9,118.6 191.0,116.5 182.4,112.6 186.0,108.5 193.2,107.4 199.1,112.1" fill="#bdefd1"/>
<polygon points="203.2,57.2 200.8,59.2 197.7,59.8 194.3,58.4 195.1,55.4 197.7,52.8 201.7,54.3" fill="#bdefd1"/>
<polygon points="232.3,562.6 225.7,563.3 218.1,561.6 214.1,555.1 216.2,549.9 224.0,553.0 229.8,556.5" fill="#bdefd1"/>
<polygon points="186.9,944.0 185.7,942.7 187.3,935.9 189.8,933.4 192.6,930.6 191.3,937.4 188.7,942.8" fill="#bdefd1"/>
<polygon points="156.0,744.0 165.0,734.0 175.0,731.0 193.0,733.0 205.0,738.0 203.0,752.0 199.0,770.0 191.0,778.0 179.0,782.0 167.0,774.0 157.0,762.0" fill="#edf1f4" opacity="0.75"/>
<polygon points="208.0,751.0 221.0,735.0 228.0,736.0 219.0,752.0" fill="#f3ecdc"/>
<polygon points="0.0,645.0 32.0,649.0 71.0,670.0 99.0,684.0 93.0,721.0 74.0,731.0 53.0,736.0 28.0,734.0 8.0,729.0 0.0,728.0" fill="#bdefd1"/>
<polygon points="0.0,672.0 7.0,674.0 9.0,680.0 0.0,682.0" fill="#83d5eb"/>
<polygon points="0.0,731.0 13.0,733.0 28.0,737.0 48.0,737.0 57.0,731.0 65.0,734.0 59.0,744.0 45.0,748.0 28.0,747.0 11.0,744.0 0.0,743.0" fill="#e9eef1" opacity="0.85"/>
<path d="M-26.9,-22.9Q-19.5,-11.7 -16.6,1.3M-26.9,-22.9Q-13.2,-12.6 -0.7,-0.9M-16.6,1.3Q-8.5,1.3 -0.7,-0.9M-16.6,1.3Q-24.6,5.9 -28.2,14.3M-16.6,1.3Q-8.7,11.0 1.1,18.8M-28.2,14.3Q-24.4,31.6 -28.2,48.8M-28.2,48.8Q-16.9,42.7 -5.3,37.1M-28.2,48.8Q-14.2,53.2 -3.2,62.9M-27.0,66.9Q-15.5,62.3 -3.2,62.9M-27.0,66.9Q-25.7,78.9 -25.4,91.0M-27.0,66.9Q-9.7,75.0 3.6,88.8M-25.4,91.0Q-10.9,89.7 3.6,88.8M-23.9,104.3Q-8.2,103.7 7.0,107.4M-19.0,158.9Q-10.6,156.6 -6.7,148.9M-19.0,158.9Q-15.0,162.7 -14.8,168.2M-19.0,158.9Q-11.1,173.2 1.3,183.8M-14.8,168.2Q-4.4,173.6 1.3,183.8M-14.8,168.2Q-22.8,179.1 -24.5,192.4M-24.5,192.4Q-22.9,209.2 -22.0,226.0M-22.0,226.0Q-11.6,227.2 -1.1,225.9M-22.0,226.0Q-16.9,228.8 -17.2,234.6M-17.2,234.6Q-10.6,236.1 -6.9,241.8M-17.2,234.6Q-23.3,251.5 -27.1,269.1M-27.1,269.1Q-10.4,264.5 6.4,260.4M-19.1,284.3Q-11.5,281.3 -3.9,278.4M-19.1,284.3Q-21.9,293.2 -22.4,302.5M-19.1,284.3Q-14.2,295.7 -5.4,304.3M-16.5,328.3Q-6.2,330.1 3.3,325.5M-16.5,328.3Q-14.1,341.0 -16.0,353.8M-16.0,353.8Q-20.6,363.9 -28.8,371.3M-16.0,353.8Q-6.8,366.5 1.6,379.8M-28.8,371.3Q-12.9,373.2 1.6,379.8M-26.5,402.3Q-24.7,407.3 -20.6,410.7M-26.5,402.3Q-13.6,416.7 3.7,425.4M-20.6,410.7Q-8.3,417.9 3.7,425.4M-20.6,410.7Q-27.4,423.4 -27.3,437.8M-27.3,437.8Q-22.7,450.1 -22.5,463.2M-22.5,463.2Q-9.5,469.6 5.0,468.0M-22.5,463.2Q-21.0,472.6 -23.8,481.7M-23.8,481.7Q-13.3,479.2 -2.5,478.2M-23.8,481.7Q-28.2,494.1 -29.9,507.3M-23.8,481.7Q-13.6,493.5 -5.0,506.6M-29.9,507.3Q-17.4,509.6 -5.0,506.6M-29.9,507.3Q-28.1,514.1 -24.7,520.3M-29.9,507.3Q-11.8,518.4 6.0,530.2M-24.7,520.3Q-9.8,526.9 6.0,530.2M-24.7,520.3Q-21.6,538.9 -22.6,557.8M-24.7,520.3Q-11.2,535.7 6.8,545.4M-22.6,557.8Q-9.1,548.9 6.8,545.4M-22.6,557.8Q-26.5,561.7 -29.3,566.3M-29.3,566.3Q-15.3,569.2 -2.8,576.0M-29.3,566.3Q-24.9,578.6 -19.3,590.4M-19.3,590.4Q-8.7,594.5 2.4,592.5M-25.6,616.0Q-29.3,627.5 -25.8,639.1M-25.8,639.1Q-16.0,641.2 -7.1,636.6M-25.8,639.1Q-19.9,652.6 -21.5,667.3M-25.8,639.1Q-15.2,649.5 -7.3,662.0M-14.1,674.5Q-9.9,680.6 -2.6,681.9M-21.0,708.3Q-10.8,701.3 1.6,700.1M-21.0,708.3Q-19.8,719.6 -16.0,730.4M-19.9,750.2Q-6.7,746.2 6.8,749.0M-24.2,766.5Q-8.0,766.2 7.8,762.9M-24.2,766.5Q-18.7,781.8 -17.3,798.0M-17.3,798.0Q-7.6,798.2 1.8,795.6M-17.3,798.0Q-18.0,807.7 -15.0,816.9M-15.0,816.9Q-8.0,813.3 -2.7,807.5M-15.0,816.9Q-10.1,823.5 -5.5,830.3M-18.2,858.1Q-5.9,858.3 4.3,851.4M-18.2,858.1Q-6.2,868.0 5.0,878.8M-19.8,877.6Q-19.8,889.1 -21.2,900.5M-21.2,900.5Q-26.9,910.3 -29.0,921.4M-29.0,921.4Q-12.4,930.5 1.6,943.3M-24.8,953.8Q-12.3,946.8 1.6,943.3M-24.8,953.8Q-20.7,959.2 -22.3,965.9M-22.3,965.9Q-9.4,961.6 3.9,964.1M-22.3,965.9Q-27.7,975.2 -26.1,985.8M-26.1,985.8Q-11.8,991.6 3.4,994.2M-26.1,985.8Q-22.7,995.7 -24.4,1006.2M-24.4,1006.2Q-10.1,1009.0 4.4,1008.9M-7.9,-16.1Q9.3,-16.3 26.4,-14.4M-0.7,-0.9Q10.4,-1.1 21.3,-3.5M-0.7,-0.9Q-15.5,4.9 -28.2,14.3M1.1,18.8Q12.6,22.2 22.4,29.1M-5.3,37.1Q-1.8,49.8 -3.2,62.9M-5.3,37.1Q7.9,53.0 21.6,68.5M-3.2,62.9Q10.0,62.4 21.6,68.5M-3.2,62.9Q2.8,75.2 3.6,88.8M-3.2,62.9Q-12.6,78.3 -25.4,91.0M3.6,88.8Q15.2,89.0 26.4,85.8M3.6,88.8Q18.4,94.6 29.8,105.7M7.0,107.4Q8.2,120.4 6.7,133.3M6.7,133.3Q16.4,129.2 26.1,125.4M6.7,133.3Q2.7,143.4 -6.7,148.9M6.7,133.3Q13.0,139.5 14.4,148.1M6.7,133.3Q-6.8,145.4 -19.0,158.9M-6.7,148.9Q-5.0,166.9 1.3,183.8M1.3,183.8Q6.9,177.7 15.0,176.0M1.3,183.8Q-10.7,190.7 -24.5,192.4M-2.3,202.4Q-3.5,214.2 -1.1,225.9M-2.3,202.4Q12.3,212.3 29.0,217.8M-1.1,225.9Q14.1,222.5 29.0,217.8M-1.1,225.9Q-5.6,233.3 -6.9,241.8M-6.9,241.8Q4.1,236.1 16.4,236.8M-6.9,241.8Q-15.0,256.9 -27.1,269.1M6.4,260.4Q17.6,262.8 25.8,270.7M6.4,260.4Q3.1,270.4 -3.9,278.4M6.4,260.4Q12.0,269.1 16.6,278.5M-3.9,278.4Q-6.4,291.2 -5.4,304.3M-3.9,278.4Q12.4,289.8 26.4,303.9M-5.4,304.3Q-4.0,316.1 3.3,325.5M-5.4,304.3Q13.1,315.9 29.7,330.0M3.3,325.5Q17.0,325.0 29.7,330.0M3.3,325.5Q-1.3,335.9 -1.6,347.2M1.6,379.8Q1.1,385.5 2.4,391.1M1.6,379.8Q13.3,388.9 19.2,402.5M2.4,391.1Q8.8,399.7 19.2,402.5M2.4,391.1Q-7.1,403.2 -20.6,410.7M3.7,425.4Q9.8,423.7 15.7,421.7M3.7,425.4Q1.0,428.9 1.6,433.3M1.6,433.3Q10.3,434.9 15.0,442.3M1.6,433.3Q3.4,450.6 5.0,468.0M1.6,433.3Q9.8,451.2 20.4,467.8M1.6,433.3Q-9.3,449.2 -22.5,463.2M5.0,468.0Q12.7,469.6 20.4,467.8M-2.5,478.2Q-16.0,493.0 -29.9,507.3M-5.0,506.6Q8.2,507.9 20.6,512.7M-5.0,506.6Q-3.0,520.0 6.0,530.2M-5.0,506.6Q-14.7,513.7 -24.7,520.3M6.0,530.2Q17.5,528.5 29.1,530.0M6.0,530.2Q4.4,537.9 6.8,545.4M6.8,545.4Q12.2,544.9 17.6,546.0M6.8,545.4Q-1.5,559.6 -2.8,576.0M6.8,545.4Q14.0,557.5 18.2,570.9M-2.8,576.0Q7.0,570.4 18.2,570.9M-2.8,576.0Q2.4,583.4 2.4,592.5M2.4,592.5Q9.5,588.3 17.7,589.3M2.9,613.4Q14.9,613.8 26.1,618.3M2.9,613.4Q12.5,628.8 18.8,645.9M-7.3,662.0Q5.0,659.9 17.5,661.1M-7.3,662.0Q-6.6,672.4 -2.6,681.9M-7.3,662.0Q-8.5,669.5 -14.1,674.5M-2.6,681.9Q-3.0,691.6 1.6,700.1M-2.6,681.9Q-10.2,696.2 -21.0,708.3M1.6,700.1Q14.7,704.1 27.9,700.3M1.6,700.1Q-2.3,708.8 -0.6,718.2M1.6,700.1Q-8.9,714.3 -16.0,730.4M-0.6,718.2Q13.8,722.4 26.0,731.2M-0.6,718.2Q0.6,734.2 6.8,749.0M6.8,749.0Q13.3,749.2 18.5,745.3M6.8,749.0Q4.1,756.2 7.8,762.9M7.8,762.9Q13.2,778.6 16.6,794.9M1.8,795.6Q9.2,794.3 16.6,794.9M1.8,795.6Q1.6,802.3 -2.7,807.5M-2.7,807.5Q9.8,813.4 23.6,813.2M-2.7,807.5Q7.6,826.8 23.3,842.1M4.3,851.4Q9.9,858.7 17.4,864.1M4.3,851.4Q1.9,865.2 5.0,878.8M4.3,851.4Q11.7,868.1 19.8,884.5M5.0,878.8Q0.1,890.6 0.6,903.4M0.6,903.4Q15.0,903.6 27.8,896.9M0.9,926.5Q13.8,932.1 27.8,931.9M0.9,926.5Q1.6,934.9 1.6,943.3M1.6,943.3Q9.9,958.9 15.8,975.6M1.6,943.3Q-8.1,956.9 -22.3,965.9M3.9,964.1Q12.4,967.1 15.8,975.6M3.9,964.1Q12.3,979.3 14.2,996.6M3.9,964.1Q-12.3,973.4 -26.1,985.8M3.4,994.2Q8.8,995.1 14.2,996.6M3.4,994.2Q1.5,1001.7 4.4,1008.9M4.4,1008.9Q8.9,1015.1 16.4,1015.8M26.4,-14.4Q34.4,-18.7 37.6,-27.3M21.3,-3.5Q33.7,-8.2 46.9,-6.6M21.3,-3.5Q19.2,12.8 22.4,29.1M22.4,29.1Q32.0,31.9 41.4,28.7M22.4,29.1Q35.6,38.7 47.5,50.1M16.1,36.1Q32.1,50.1 51.7,58.5M16.1,36.1Q5.9,49.1 -3.2,62.9M21.6,68.5Q37.2,65.2 51.7,58.5M21.6,68.5Q27.1,76.3 26.4,85.8M26.4,85.8Q30.3,95.3 29.8,105.7M29.8,105.7Q39.0,107.1 47.0,102.6M26.1,125.4Q35.8,135.6 42.9,147.7M14.4,148.1Q14.3,162.1 15.0,176.0M15.0,176.0Q24.4,183.4 36.3,183.9M22.9,192.9Q30.3,201.3 41.1,204.1M22.9,192.9Q23.9,205.9 29.0,217.8M29.0,217.8Q25.9,229.5 16.4,236.8M25.8,270.7Q31.5,266.1 38.9,267.0M25.8,270.7Q19.6,272.7 16.6,278.5M16.6,278.5Q28.3,282.5 38.4,289.8M16.6,278.5Q21.4,291.2 26.4,303.9M16.6,278.5Q8.6,293.9 -5.4,304.3M26.4,303.9Q35.4,304.6 44.0,301.8M26.4,303.9Q35.7,315.9 41.7,329.9M29.7,330.0Q35.7,330.8 41.7,329.9M29.7,330.0Q39.7,340.3 50.7,349.6M24.2,349.5Q10.7,363.1 1.6,379.8M26.8,373.4Q19.6,387.0 19.2,402.5M26.8,373.4Q16.6,385.0 2.4,391.1M19.2,402.5Q29.9,407.4 40.4,412.8M15.7,421.7Q13.3,432.0 15.0,442.3M15.7,421.7Q29.0,425.2 40.2,433.1M15.7,421.7Q9.1,428.1 1.6,433.3M15.0,442.3Q27.1,436.2 40.2,433.1M15.0,442.3Q19.9,454.6 20.4,467.8M15.0,442.3Q27.5,450.4 36.7,462.1M20.4,467.8Q27.7,462.6 36.7,462.1M20.4,467.8Q18.2,476.6 15.0,485.0M15.0,485.0Q20.1,498.4 20.6,512.7M15.0,485.0Q6.9,497.6 -5.0,506.6M20.6,512.7Q32.1,506.8 41.8,498.2M29.1,530.0Q38.1,529.1 47.0,530.4M29.1,530.0Q16.3,535.3 6.8,545.4M17.6,546.0Q31.8,544.5 44.7,550.8M18.2,570.9Q31.6,578.5 47.0,579.7M18.2,570.9Q18.5,580.1 17.7,589.3M18.2,570.9Q33.8,584.5 50.0,597.5M17.7,589.3Q30.8,600.4 42.4,613.1M26.1,618.3Q21.1,631.7 18.8,645.9M18.8,645.9Q30.7,645.0 42.7,645.6M18.8,645.9Q21.2,653.8 17.5,661.1M17.5,661.1Q29.7,658.2 42.2,658.2M17.5,661.1Q17.0,674.5 16.5,687.8M16.5,687.8Q29.6,682.3 42.6,676.3M27.9,700.3Q39.8,697.3 52.0,696.1M27.9,700.3Q24.7,715.6 26.0,731.2M27.9,700.3Q37.7,716.1 45.7,732.8M26.0,731.2Q35.6,735.3 45.7,732.8M26.0,731.2Q23.9,739.1 18.5,745.3M18.5,745.3Q29.0,749.0 40.1,749.8M18.5,745.3Q22.6,760.5 21.8,776.3M18.5,745.3Q28.7,757.4 42.0,765.9M18.5,745.3Q15.0,755.2 7.8,762.9M21.8,776.3Q31.0,769.4 42.0,765.9M16.6,794.9Q16.9,805.3 23.6,813.2M16.6,794.9Q31.1,809.5 49.5,818.5M23.6,813.2Q36.1,817.8 49.5,818.5M23.6,813.2Q7.5,819.2 -5.5,830.3M23.3,842.1Q16.6,852.1 17.4,864.1M23.3,842.1Q36.9,845.5 47.1,855.2M23.3,842.1Q15.5,850.2 4.3,851.4M17.4,864.1Q21.6,873.9 19.8,884.5M17.4,864.1Q33.1,870.2 46.3,880.8M27.8,896.9Q35.0,902.6 41.0,909.5M27.8,896.9Q30.0,914.4 27.8,931.9M27.8,931.9Q24.8,937.2 18.8,938.4M27.8,931.9Q39.4,938.0 49.7,946.2M18.8,938.4Q34.1,942.5 49.7,946.2M18.8,938.4Q32.5,956.9 45.5,975.9M15.8,975.6Q30.6,975.4 45.5,975.9M14.2,996.6Q27.6,997.8 39.8,992.1M16.4,1015.8Q31.7,1010.4 47.9,1010.1M37.6,-27.3Q53.3,-24.0 69.4,-23.7M37.6,-27.3Q40.0,-15.9 46.9,-6.6M46.9,-6.6Q55.7,-0.2 66.4,1.8M46.9,-6.6Q42.8,10.9 41.4,28.7M41.4,28.7Q56.3,27.4 68.8,19.2M47.5,50.1Q57.5,46.4 68.1,44.7M47.5,50.1Q46.7,55.8 51.7,58.5M39.8,92.7Q42.7,98.2 47.0,102.6M39.8,92.7Q50.9,105.3 65.6,113.5M47.0,102.6Q54.6,111.0 65.6,113.5M47.0,102.6Q42.1,114.8 44.1,127.7M47.0,102.6Q35.0,112.6 26.1,125.4M44.1,127.7Q54.7,132.9 66.4,131.6M44.1,127.7Q44.1,137.7 42.9,147.7M44.1,127.7Q28.0,136.1 14.4,148.1M42.9,147.7Q52.3,146.2 61.5,148.3M42.9,147.7Q36.7,165.2 36.3,183.9M36.3,183.9Q54.9,182.0 72.8,176.5M36.3,183.9Q41.8,193.2 41.1,204.1M41.1,204.1Q54.0,202.5 66.4,198.4M41.1,204.1Q40.5,212.1 37.9,219.8M37.9,219.8Q37.5,230.3 38.2,240.9M38.2,240.9Q48.7,246.8 60.8,247.2M38.2,240.9Q34.9,254.0 38.9,267.0M38.2,240.9Q30.1,255.0 25.8,270.7M38.9,267.0Q52.2,268.0 65.4,266.2M38.9,267.0Q34.7,278.3 38.4,289.8M38.4,289.8Q54.7,292.1 71.2,292.3M38.4,289.8Q43.0,294.9 44.0,301.8M38.4,289.8Q32.5,297.0 26.4,303.9M44.0,301.8Q58.1,304.1 71.9,300.7M44.0,301.8Q54.3,318.4 64.1,335.3M50.7,349.6Q60.4,344.9 71.1,346.0M50.7,349.6Q57.8,358.7 60.5,370.0M39.4,381.5Q48.7,373.4 60.5,370.0M50.1,399.7Q56.6,399.5 59.6,393.7M50.1,399.7Q42.6,404.3 40.4,412.8M40.4,412.8Q40.0,423.0 40.2,433.1M40.2,433.1Q52.7,436.6 65.2,433.4M36.7,462.1Q50.6,465.8 64.3,470.0M42.5,484.9Q55.9,485.5 69.1,483.2M42.5,484.9Q42.9,491.6 41.8,498.2M42.5,484.9Q56.3,495.9 65.7,510.8M41.8,498.2Q54.6,502.8 65.7,510.8M41.8,498.2Q44.0,514.4 47.0,530.4M47.0,530.4Q59.6,529.3 70.1,522.4M47.0,530.4Q42.2,540.2 44.7,550.8M47.0,530.4Q32.0,537.7 17.6,546.0M44.7,550.8Q45.5,565.3 47.0,579.7M44.7,550.8Q32.9,562.7 18.2,570.9M47.0,579.7Q55.8,572.3 66.3,567.8M47.0,579.7Q48.0,588.7 50.0,597.5M50.0,597.5Q58.4,597.8 63.9,591.4M50.0,597.5Q45.9,605.1 42.4,613.1M42.4,613.1Q53.4,611.5 64.1,608.3M42.4,613.1Q38.8,629.4 42.7,645.6M42.4,613.1Q48.7,628.3 61.2,639.1M42.4,613.1Q33.8,631.8 18.8,645.9M42.7,645.6Q51.2,640.1 61.2,639.1M42.7,645.6Q45.5,652.0 42.2,658.2M42.6,676.3Q50.5,684.6 52.0,696.1M52.0,696.1Q57.4,698.5 63.2,699.9M52.0,696.1Q49.5,714.6 45.7,732.8M45.7,732.8Q45.2,742.0 40.1,749.8M45.7,732.8Q55.1,745.2 68.2,753.7M45.7,732.8Q30.7,735.9 18.5,745.3M40.1,749.8Q53.7,754.8 68.2,753.7M40.1,749.8Q42.5,757.6 42.0,765.9M42.0,765.9Q38.0,775.5 39.2,785.9M42.0,765.9Q27.8,779.1 16.6,794.9M39.2,785.9Q55.6,787.1 70.7,793.9M39.2,785.9Q43.1,802.6 49.5,818.5M49.5,818.5Q48.8,823.8 50.5,828.8M49.5,818.5Q56.0,827.5 65.1,833.9M50.5,828.8Q56.8,834.4 65.1,833.9M50.5,828.8Q51.7,842.4 47.1,855.2M50.5,828.8Q62.2,840.1 69.4,854.7M47.1,855.2Q46.7,868.0 46.3,880.8M46.3,880.8Q55.4,881.9 64.5,882.4M46.3,880.8Q47.2,895.8 41.0,909.5M46.3,880.8Q35.7,887.3 27.8,896.9M41.0,909.5Q56.8,907.1 71.0,899.6M41.0,909.5Q41.7,919.6 36.0,927.9M36.0,927.9Q50.3,928.7 64.2,925.3M36.0,927.9Q41.7,937.9 49.7,946.2M49.7,946.2Q62.0,946.9 72.8,941.1M49.7,946.2Q50.1,961.4 45.5,975.9M49.7,946.2Q64.0,956.5 73.5,971.4M45.5,975.9Q59.7,974.8 73.5,971.4M45.5,975.9Q44.1,984.5 39.8,992.1M39.8,992.1Q51.9,989.6 64.0,992.6M39.8,992.1Q45.1,1000.5 47.9,1010.1M47.9,1010.1Q54.8,1005.1 63.3,1005.1M69.4,-23.7Q80.7,-26.8 92.1,-23.9M69.4,-23.7Q57.6,-15.9 46.9,-6.6M66.4,1.8Q77.4,0.9 88.4,-0.1M66.4,1.8Q70.8,10.0 68.8,19.2M68.8,19.2Q82.3,20.1 94.4,26.1M68.1,44.7Q74.0,48.3 80.4,45.5M68.1,44.7Q67.0,56.8 61.6,67.8M68.1,44.7Q62.0,54.1 51.7,58.5M61.6,67.8Q49.6,79.3 39.8,92.7M62.2,94.5Q77.6,89.8 93.4,86.6M62.2,94.5Q56.2,101.6 47.0,102.6M65.6,113.5Q76.1,118.8 87.6,116.2M65.6,113.5Q76.3,122.7 87.0,131.9M66.4,131.6Q76.7,133.1 87.0,131.9M66.4,131.6Q61.6,139.3 61.5,148.3M66.4,131.6Q74.5,147.6 88.2,159.2M61.5,148.3Q76.0,151.1 88.2,159.2M61.5,148.3Q70.0,161.3 72.8,176.5M72.8,176.5Q81.1,181.9 90.7,179.8M72.8,176.5Q68.0,187.0 66.4,198.4M72.8,176.5Q57.9,191.3 41.1,204.1M66.4,198.4Q76.6,195.2 86.4,190.6M71.0,215.8Q80.5,220.0 90.9,220.9M71.0,215.8Q62.3,230.3 60.8,247.2M71.0,215.8Q56.6,230.9 38.2,240.9M60.8,247.2Q47.8,254.9 38.9,267.0M65.4,266.2Q69.2,279.1 71.2,292.3M65.4,266.2Q54.3,280.8 38.4,289.8M71.2,292.3Q76.6,294.7 81.2,291.1M64.1,335.3Q78.6,336.7 92.1,331.0M64.1,335.3Q69.6,339.3 71.1,346.0M71.1,346.0Q76.7,349.7 80.9,354.9M71.1,346.0Q65.1,357.7 60.5,370.0M71.1,346.0Q82.7,358.8 91.4,373.7M60.5,370.0Q76.0,371.2 91.4,373.7M60.5,370.0Q70.5,384.7 80.9,399.1M60.5,370.0Q53.3,384.2 50.1,399.7M59.6,393.7Q47.6,400.9 40.4,412.8M70.9,418.3Q78.8,417.8 86.7,419.3M70.9,418.3Q68.8,426.1 65.2,433.4M65.2,433.4Q80.0,441.0 96.0,445.1M65.2,433.4Q65.2,451.7 64.3,470.0M64.3,470.0Q80.0,465.0 94.0,456.3M64.3,470.0Q76.0,475.4 85.3,484.3M65.7,510.8Q73.6,508.9 80.1,513.8M65.7,510.8Q71.4,515.2 70.1,522.4M70.1,522.4Q58.4,537.5 44.7,550.8M68.9,547.9Q77.2,549.3 85.0,546.1M66.3,567.8Q80.1,570.2 93.7,572.9M63.9,591.4Q64.6,599.9 64.1,608.3M64.1,608.3Q73.2,607.9 80.8,612.9M64.1,608.3Q59.3,623.4 61.2,639.1M61.2,639.1Q50.2,647.1 42.2,658.2M58.9,654.9Q76.4,652.4 93.7,656.1M69.5,678.4Q75.9,674.7 83.2,674.8M69.5,678.4Q67.2,689.4 63.2,699.9M69.5,678.4Q61.5,688.0 52.0,696.1M63.2,699.9Q65.9,710.2 71.3,719.5M63.2,699.9Q57.8,718.1 45.7,732.8M71.3,719.5Q71.4,736.8 68.2,753.7M71.3,719.5Q78.0,734.3 89.3,745.9M68.2,753.7Q79.0,750.4 89.3,745.9M68.2,753.7Q66.0,761.9 61.2,768.8M68.2,753.7Q81.1,758.2 92.8,765.2M61.2,768.8Q77.0,767.1 92.8,765.2M61.2,768.8Q68.1,780.5 70.7,793.9M70.7,793.9Q82.8,796.6 94.7,792.9M70.7,793.9Q63.9,798.5 63.9,806.7M70.7,793.9Q73.3,803.9 80.8,811.0M70.7,793.9Q59.6,805.8 49.5,818.5M63.9,806.7Q73.3,805.3 80.8,811.0M63.9,806.7Q55.4,816.6 50.5,828.8M65.1,833.9Q76.7,838.1 88.5,834.5M65.1,833.9Q68.2,844.1 69.4,854.7M65.1,833.9Q76.4,845.3 89.0,855.2M69.4,854.7Q67.9,868.7 64.5,882.4M69.4,854.7Q59.3,869.0 46.3,880.8M64.5,882.4Q64.1,892.4 71.0,899.6M64.5,882.4Q74.8,893.7 84.7,905.4M64.5,882.4Q55.8,898.6 41.0,909.5M71.0,899.6Q79.1,899.5 84.7,905.4M71.0,899.6Q68.1,912.6 64.2,925.3M71.0,899.6Q52.5,912.5 36.0,927.9M64.2,925.3Q78.5,929.2 92.8,925.5M64.2,925.3Q68.4,933.2 72.8,941.1M72.8,941.1Q70.1,956.3 73.5,971.4M73.5,971.4Q80.2,973.2 87.1,974.0M73.5,971.4Q71.8,983.4 64.0,992.6M64.0,992.6Q72.7,992.0 80.9,988.9M64.0,992.6Q65.0,999.0 63.3,1005.1M63.3,1005.1Q76.7,1004.3 90.2,1004.8M92.1,-23.9Q91.0,-11.9 88.4,-0.1M92.1,-23.9Q100.9,-13.6 111.5,-5.1M88.4,-0.1Q99.8,-3.3 111.5,-5.1M88.4,-0.1Q89.2,13.5 94.4,26.1M94.4,26.1Q105.8,26.4 116.8,23.0M94.4,26.1Q89.2,37.1 80.4,45.5M80.4,45.5Q84.1,55.4 87.4,65.4M80.4,45.5Q98.1,55.0 112.8,68.8M87.4,65.4Q89.3,76.3 93.4,86.6M87.4,65.4Q96.4,75.0 106.7,83.4M87.4,65.4Q74.8,79.9 62.2,94.5M93.4,86.6Q100.2,85.4 106.7,83.4M93.4,86.6Q90.6,101.5 87.6,116.2M93.4,86.6Q80.6,101.2 65.6,113.5M87.6,116.2Q86.4,124.0 87.0,131.9M87.0,131.9Q101.8,129.1 116.7,127.3M88.2,159.2Q95.7,153.0 103.6,147.5M90.7,179.8Q102.5,182.4 114.5,183.2M90.7,179.8Q85.4,184.0 86.4,190.6M86.4,190.6Q96.4,198.1 108.6,200.5M86.4,190.6Q86.1,206.1 90.9,220.9M86.4,190.6Q76.1,201.6 71.0,215.8M90.9,220.9Q97.6,226.2 106.1,226.5M92.3,246.3Q104.0,244.3 113.0,236.5M92.3,246.3Q90.1,255.3 81.9,259.5M92.3,246.3Q80.9,259.0 65.4,266.2M81.9,259.5Q93.4,260.5 102.9,267.1M81.9,259.5Q83.2,275.3 81.2,291.1M81.9,259.5Q89.5,277.3 102.7,291.4M81.6,301.4Q93.8,306.0 106.7,303.7M81.6,301.4Q75.8,319.9 64.1,335.3M92.1,331.0Q85.7,342.6 80.9,354.9M92.1,331.0Q80.6,337.2 71.1,346.0M80.9,354.9Q96.5,352.9 111.0,346.5M80.9,354.9Q88.2,363.1 91.4,373.7M80.9,354.9Q69.5,360.9 60.5,370.0M91.4,373.7Q84.7,385.8 80.9,399.1M91.4,373.7Q76.7,385.6 59.6,393.7M80.9,399.1Q83.7,409.2 86.7,419.3M80.9,399.1Q74.1,407.8 70.9,418.3M86.7,419.3Q76.6,427.4 65.2,433.4M94.0,456.3Q99.4,463.2 108.1,464.3M94.0,456.3Q89.6,470.3 85.3,484.3M94.0,456.3Q80.2,468.6 69.1,483.2M85.3,484.3Q95.4,487.0 105.6,484.7M85.3,484.3Q84.5,499.4 80.1,513.8M80.1,513.8Q92.0,510.2 103.5,505.4M80.1,513.8Q82.7,518.8 84.4,524.2M80.1,513.8Q96.0,522.6 113.7,526.9M80.1,513.8Q73.4,516.1 70.1,522.4M84.4,524.2Q98.9,526.3 113.7,526.9M84.4,524.2Q87.7,535.1 85.0,546.1M84.4,524.2Q74.2,534.4 68.9,547.9M93.7,572.9Q107.8,585.4 116.8,601.9M88.2,592.7Q103.3,594.7 116.8,601.9M88.2,592.7Q81.7,601.8 80.8,612.9M88.2,592.7Q77.5,602.6 64.1,608.3M80.8,612.9Q99.2,612.2 117.0,616.4M80.8,612.9Q87.1,628.0 93.9,642.8M93.9,642.8Q90.3,649.4 93.7,656.1M93.9,642.8Q106.3,648.6 114.0,659.9M93.7,656.1Q103.8,658.3 114.0,659.9M93.7,656.1Q86.5,664.4 83.2,674.8M83.2,674.8Q100.0,675.7 116.9,675.5M83.2,674.8Q86.9,688.2 88.6,702.0M83.2,674.8Q72.3,686.6 63.2,699.9M88.6,702.0Q87.6,713.9 87.4,725.8M88.6,702.0Q78.0,708.8 71.3,719.5M87.4,725.8Q90.4,735.6 89.3,745.9M87.4,725.8Q96.8,732.6 103.4,742.2M87.4,725.8Q77.9,739.8 68.2,753.7M89.3,745.9Q96.0,742.5 103.4,742.2M89.3,745.9Q92.1,755.3 92.8,765.2M92.8,765.2Q101.0,769.0 106.3,776.3M92.8,765.2Q95.1,779.0 94.7,792.9M92.8,765.2Q103.1,777.5 115.5,787.6M94.7,792.9Q90.7,804.2 80.8,811.0M80.8,811.0Q86.1,822.3 88.5,834.5M80.8,811.0Q93.6,829.7 111.6,843.5M88.5,834.5Q100.2,838.5 111.6,843.5M89.0,855.2Q98.6,859.5 107.5,865.1M84.4,884.7Q98.3,878.5 112.5,872.8M84.4,884.7Q86.6,895.0 84.7,905.4M84.7,905.4Q95.8,902.3 107.3,901.2M84.7,905.4Q73.7,914.6 64.2,925.3M92.8,925.5Q98.9,929.4 106.0,927.9M92.8,925.5Q93.0,939.8 87.3,953.0M87.3,953.0Q86.1,963.5 87.1,974.0M87.1,974.0Q96.7,967.2 106.8,961.1M87.1,974.0Q83.3,981.2 80.9,988.9M87.1,974.0Q74.7,982.3 64.0,992.6M80.9,988.9Q96.3,988.5 110.9,983.5M80.9,988.9Q85.3,997.0 90.2,1004.8M80.9,988.9Q70.8,995.7 63.3,1005.1M90.2,1004.8Q98.8,1013.7 110.8,1016.6M115.8,-28.8Q124.1,-24.0 133.5,-22.6M115.8,-28.8Q116.2,-16.5 111.5,-5.1M111.5,-5.1Q119.2,-5.2 124.5,0.2M111.5,-5.1Q115.7,8.6 116.8,23.0M116.8,23.0Q121.5,21.5 125.6,24.3M114.8,44.0Q111.8,56.2 112.8,68.8M114.8,44.0Q124.7,52.1 129.6,64.0M114.8,44.0Q101.4,55.0 87.4,65.4M112.8,68.8Q110.2,76.3 106.7,83.4M112.8,68.8Q105.0,79.8 93.4,86.6M106.7,83.4Q120.6,82.4 134.6,82.6M106.7,83.4Q96.7,99.6 87.6,116.2M115.4,104.3Q123.9,108.2 126.7,117.1M115.4,104.3Q112.7,116.0 116.7,127.3M116.7,127.3Q107.3,135.6 103.6,147.5M116.7,127.3Q128.6,139.5 138.0,153.7M103.6,147.5Q121.0,149.6 138.0,153.7M103.6,147.5Q109.3,165.3 114.5,183.2M103.6,147.5Q116.9,156.5 126.4,169.5M103.6,147.5Q100.3,164.9 90.7,179.8M114.5,183.2Q118.6,174.8 126.4,169.5M114.5,183.2Q114.3,192.8 108.6,200.5M108.6,200.5Q122.8,194.2 138.1,191.9M108.6,200.5Q119.0,212.0 131.9,220.6M108.6,200.5Q97.1,208.4 90.9,220.9M106.1,226.5Q119.2,224.3 131.9,220.6M106.1,226.5Q118.1,231.2 125.9,241.5M113.0,236.5Q118.8,240.6 125.9,241.5M113.0,236.5Q108.0,251.8 102.9,267.1M113.0,236.5Q120.3,250.3 126.6,264.6M113.0,236.5Q97.0,247.5 81.9,259.5M102.9,267.1Q114.6,264.1 126.6,264.6M102.9,267.1Q106.1,279.3 102.7,291.4M102.7,291.4Q116.6,284.6 132.1,283.9M102.7,291.4Q104.7,297.6 106.7,303.7M106.7,303.7Q116.5,308.2 127.2,306.5M106.7,303.7Q105.2,316.2 111.3,327.1M111.3,327.1Q108.6,336.7 111.0,346.5M111.3,327.1Q93.4,338.1 80.9,354.9M111.0,346.5Q118.0,354.3 127.8,357.9M111.0,346.5Q117.1,358.1 116.6,371.2M111.0,346.5Q102.7,361.2 91.4,373.7M116.6,371.2Q125.5,373.6 132.0,380.2M116.6,371.2Q114.3,380.7 115.5,390.4M116.6,371.2Q119.2,387.4 124.2,403.1M116.6,371.2Q98.9,385.3 80.9,399.1M115.5,390.4Q118.6,397.6 124.2,403.1M115.5,390.4Q117.6,408.1 114.8,425.7M114.8,425.7Q123.1,423.2 131.8,422.7M108.3,432.5Q120.5,438.3 133.1,443.0M108.3,432.5Q110.7,448.4 108.1,464.3M105.6,484.7Q116.4,484.4 126.5,480.2M103.5,505.4Q106.5,517.1 113.7,526.9M113.7,526.9Q123.3,528.1 132.3,524.7M112.9,543.8Q125.5,540.8 138.2,543.3M112.9,543.8Q116.3,554.6 115.3,566.0M112.9,543.8Q105.6,559.9 93.7,572.9M115.3,566.0Q113.2,584.1 116.8,601.9M116.8,601.9Q124.8,598.4 133.5,598.5M116.8,601.9Q120.8,609.1 117.0,616.4M117.0,616.4Q127.3,615.4 135.4,609.0M117.0,616.4Q115.4,627.9 106.7,635.6M117.0,616.4Q106.9,630.9 93.9,642.8M106.7,635.6Q117.9,634.4 127.9,639.6M114.0,659.9Q126.4,654.7 139.7,652.7M116.9,675.5Q110.6,692.1 109.8,709.8M116.9,675.5Q125.6,689.5 137.0,701.5M109.8,709.8Q108.2,718.5 111.6,726.7M109.8,709.8Q123.2,717.9 137.0,725.4M109.8,709.8Q99.1,718.5 87.4,725.8M111.6,726.7Q124.3,727.7 137.0,725.4M111.6,726.7Q105.5,733.4 103.4,742.2M106.3,776.3Q113.4,780.0 115.5,787.6M115.5,787.6Q114.9,797.2 116.8,806.5M116.8,806.5Q122.6,811.9 127.9,817.7M116.8,806.5Q102.0,819.9 88.5,834.5M111.6,843.5Q108.1,854.0 107.5,865.1M111.6,843.5Q101.7,851.9 89.0,855.2M107.5,865.1Q117.8,857.5 129.5,852.2M112.5,872.8Q112.5,887.5 107.3,901.2M112.5,872.8Q101.2,891.3 84.7,905.4M107.3,901.2Q119.7,901.8 129.3,909.6M107.3,901.2Q107.3,914.6 106.0,927.9M106.0,927.9Q97.9,941.4 87.3,953.0M104.9,950.6Q118.1,947.5 131.7,946.0M104.9,950.6Q105.8,955.9 106.8,961.1M106.8,961.1Q110.2,972.1 110.9,983.5M106.8,961.1Q123.8,974.4 136.0,992.2M106.8,961.1Q94.3,975.4 80.9,988.9M110.8,1016.6Q119.1,1015.9 127.2,1014.0M133.5,-22.6Q146.7,-20.9 159.5,-17.4M133.5,-22.6Q128.1,-11.6 124.5,0.2M133.5,-22.6Q140.2,-9.4 147.5,3.5M124.5,0.2Q136.1,1.1 147.5,3.5M124.5,0.2Q123.2,12.4 125.6,24.3M125.6,24.3Q138.8,21.2 151.6,16.6M126.1,45.2Q143.7,49.0 161.5,46.8M126.1,45.2Q140.6,55.7 157.9,60.2M129.6,64.0Q131.5,73.5 134.6,82.6M129.6,64.0Q116.8,72.1 106.7,83.4M134.6,82.6Q147.5,87.6 159.3,95.0M134.6,82.6Q127.3,99.1 126.7,117.1M126.7,117.1Q144.0,119.4 160.5,113.9M126.7,117.1Q128.3,127.2 129.3,137.5M129.3,137.5Q133.8,145.5 138.0,153.7M138.0,153.7Q149.7,166.2 159.2,180.6M126.4,169.5Q142.1,177.2 159.2,180.6M126.4,169.5Q131.2,181.2 138.1,191.9M126.4,169.5Q118.3,185.5 108.6,200.5M138.1,191.9Q148.8,195.0 159.9,194.8M138.1,191.9Q134.2,206.0 131.9,220.6M131.9,220.6Q122.4,228.4 113.0,236.5M125.9,241.5Q143.3,237.5 161.1,235.9M125.9,241.5Q143.4,255.4 161.5,268.6M126.6,264.6Q131.1,273.7 132.1,283.9M132.1,283.9Q140.0,290.2 150.0,291.4M132.1,283.9Q129.3,295.1 127.2,306.5M132.1,283.9Q120.2,294.9 106.7,303.7M127.2,306.5Q138.0,301.9 149.7,303.2M127.2,306.5Q125.6,315.3 127.3,324.0M127.2,306.5Q117.3,315.3 111.3,327.1M127.3,324.0Q140.5,322.1 153.3,325.8M127.3,324.0Q116.3,333.2 111.0,346.5M127.8,357.9Q133.9,368.4 132.0,380.2M132.0,380.2Q144.7,380.9 157.0,377.4M124.2,403.1Q125.5,413.8 131.8,422.7M133.1,443.0Q147.3,442.1 161.1,445.2M133.1,443.0Q133.2,455.2 127.7,466.0M127.7,466.0Q140.7,462.1 152.5,455.4M127.7,466.0Q140.6,479.4 156.4,489.4M126.5,480.2Q142.4,481.7 156.4,489.4M126.5,480.2Q123.3,492.1 124.5,504.3M124.5,504.3Q138.3,502.8 151.4,507.5M124.5,504.3Q125.6,515.6 132.3,524.7M124.5,504.3Q144.1,515.8 159.4,532.7M132.3,524.7Q145.5,530.0 159.4,532.7M132.3,524.7Q137.2,533.4 138.2,543.3M138.2,543.3Q142.4,546.3 146.1,549.8M138.2,543.3Q137.0,555.8 133.3,567.7M138.2,543.3Q140.1,555.3 146.3,565.8M133.3,567.7Q131.8,583.2 133.5,598.5M133.3,567.7Q146.8,579.6 159.0,592.7M133.3,567.7Q126.6,585.6 116.8,601.9M133.5,598.5Q135.8,603.5 135.4,609.0M133.5,598.5Q142.8,609.3 155.7,615.3M135.4,609.0Q145.8,611.2 155.7,615.3M127.9,639.6Q140.4,639.3 151.4,633.4M127.9,639.6Q135.3,644.8 139.7,652.7M127.9,639.6Q139.8,652.6 151.7,665.5M139.7,652.7Q146.1,658.7 151.7,665.5M133.9,685.1Q121.0,696.7 109.8,709.8M137.0,725.4Q147.1,723.5 157.2,725.1M137.0,725.4Q138.1,732.8 138.7,740.2M138.7,740.2Q135.2,754.4 139.0,768.6M138.7,740.2Q140.1,757.5 147.9,772.9M139.0,768.6Q131.3,775.2 130.5,785.4M139.0,768.6Q140.2,783.6 146.7,797.2M130.5,785.4Q137.0,793.4 146.7,797.2M130.5,785.4Q127.2,801.4 127.9,817.7M127.9,817.7Q139.2,816.3 148.9,810.3M127.9,817.7Q143.0,829.2 161.3,833.8M127.9,817.7Q120.6,831.1 111.6,843.5M134.9,830.4Q148.0,832.7 161.3,833.8M129.5,852.2Q141.2,855.5 149.6,864.2M129.5,852.2Q128.2,863.9 127.2,875.5M127.2,875.5Q129.4,892.5 129.3,909.6M127.2,875.5Q114.5,886.2 107.3,901.2M129.3,909.6Q140.9,906.1 152.3,902.0M129.3,909.6Q136.4,918.2 140.0,928.7M140.0,928.7Q151.4,930.1 161.3,924.1M140.0,928.7Q137.9,938.3 131.7,946.0M140.0,928.7Q152.2,932.5 161.8,941.0M131.7,946.0Q144.3,956.2 159.3,962.6M136.5,974.5Q148.0,968.8 159.3,962.6M136.5,974.5Q139.7,983.4 136.0,992.2M136.0,992.2Q146.9,990.0 154.4,982.0M136.0,992.2Q123.1,1004.1 110.8,1016.6M159.5,-17.4Q167.5,-20.9 175.3,-17.0M159.5,-17.4Q156.7,-5.1 147.5,3.5M147.5,3.5Q159.6,0.1 172.0,-2.4M147.5,3.5Q151.9,9.3 151.6,16.6M147.5,3.5Q156.9,15.1 169.6,22.8M151.6,16.6Q154.2,32.4 161.5,46.8M161.5,46.8Q171.7,46.0 181.8,44.2M161.5,46.8Q156.0,52.5 157.9,60.2M157.9,60.2Q168.0,64.0 174.0,72.9M157.9,60.2Q160.7,77.5 159.3,95.0M157.9,60.2Q146.6,71.7 134.6,82.6M160.5,113.9Q165.2,114.5 169.2,112.0M160.5,113.9Q158.1,125.3 159.3,136.8M159.3,136.8Q166.8,140.6 175.1,139.3M155.4,153.0Q164.0,157.7 173.8,156.6M155.4,153.0Q157.0,166.8 159.2,180.6M159.2,180.6Q167.9,175.1 178.1,174.0M159.9,194.8Q169.4,194.3 176.4,200.8M159.9,194.8Q171.4,207.2 182.5,220.0M159.9,194.8Q147.2,209.1 131.9,220.6M161.1,235.9Q164.7,252.7 168.9,269.4M161.5,268.6Q157.1,280.7 150.0,291.4M161.5,268.6Q147.4,277.3 132.1,283.9M150.0,291.4Q152.5,297.4 149.7,303.2M150.0,291.4Q137.5,297.3 127.2,306.5M149.7,303.2Q163.5,304.5 175.2,312.0M149.7,303.2Q151.4,314.5 153.3,325.8M149.7,303.2Q163.9,320.7 182.3,333.7M153.3,325.8Q167.3,331.7 182.3,333.7M153.3,325.8Q137.8,339.6 127.8,357.9M153.9,358.5Q156.8,367.7 157.0,377.4M153.9,358.5Q143.3,369.8 132.0,380.2M157.0,377.4Q152.0,388.4 152.3,400.5M157.0,377.4Q138.6,387.7 124.2,403.1M152.3,400.5Q167.9,399.1 183.2,402.3M152.3,400.5Q156.5,410.4 158.7,420.9M152.3,400.5Q163.1,408.2 170.3,419.4M152.3,400.5Q141.6,411.2 131.8,422.7M158.7,420.9Q164.3,418.6 170.3,419.4M158.7,420.9Q157.7,433.3 161.1,445.2M152.5,455.4Q164.7,458.0 174.3,466.0M152.5,455.4Q137.1,465.3 126.5,480.2M156.4,489.4Q152.4,498.0 151.4,507.5M156.4,489.4Q168.2,496.3 180.2,502.7M151.4,507.5Q165.8,505.1 180.2,502.7M151.4,507.5Q163.5,517.9 176.7,526.7M159.4,532.7Q151.4,540.2 146.1,549.8M159.4,532.7Q172.7,541.1 183.7,552.4M159.4,532.7Q150.1,540.5 138.2,543.3M146.1,549.8Q165.0,548.5 183.7,552.4M146.1,549.8Q162.9,563.1 180.9,574.8M146.3,565.8Q164.1,568.1 180.9,574.8M159.0,592.7Q167.0,596.3 174.1,601.4M155.7,615.3Q153.2,624.3 151.4,633.4M155.7,615.3Q140.0,625.4 127.9,639.6M151.4,633.4Q142.4,641.1 139.7,652.7M151.7,665.5Q164.5,667.6 177.2,665.2M155.9,678.7Q168.2,681.1 180.7,679.6M155.9,678.7Q148.4,688.2 147.4,700.3M147.4,700.3Q158.4,704.8 170.2,704.3M147.4,700.3Q152.0,712.8 157.2,725.1M147.4,700.3Q164.8,710.4 182.0,720.6M147.4,700.3Q139.5,711.8 137.0,725.4M157.2,725.1Q153.1,738.9 156.6,752.9M156.6,752.9Q168.9,749.3 179.8,742.7M156.6,752.9Q145.6,758.2 139.0,768.6M147.9,772.9Q160.7,768.6 173.0,762.9M147.9,772.9Q162.5,778.4 172.8,790.1M146.7,797.2Q158.8,790.1 172.8,790.1M146.7,797.2Q143.9,804.4 148.9,810.3M146.7,797.2Q139.4,809.4 127.9,817.7M148.9,810.3Q142.5,820.8 134.9,830.4M161.3,833.8Q156.1,849.3 149.6,864.2M161.3,833.8Q169.6,846.5 183.1,853.2M161.3,833.8Q143.6,839.9 129.5,852.2M149.6,864.2Q160.5,872.9 173.1,879.0M155.8,886.3Q163.4,880.0 173.1,879.0M155.8,886.3Q151.7,893.6 152.3,902.0M155.8,886.3Q160.8,894.5 169.7,898.2M152.3,902.0Q160.6,898.0 169.7,898.2M152.3,902.0Q155.7,913.5 161.3,924.1M161.3,924.1Q167.8,923.2 174.3,922.2M161.3,924.1Q174.8,930.2 183.4,942.3M161.8,941.0Q172.8,938.6 183.4,942.3M161.8,941.0Q164.3,952.2 159.3,962.6M154.4,982.0Q163.8,990.2 175.2,995.4M154.4,982.0Q151.2,1000.5 148.8,1019.1M148.8,1019.1Q163.4,1016.5 178.2,1016.5M175.3,-17.0Q162.8,-4.9 147.5,3.5M172.0,-2.4Q187.0,0.4 202.1,-0.5M169.6,22.8Q184.2,24.3 198.9,24.7M181.8,44.2Q191.9,42.3 202.0,40.4M181.8,44.2Q170.2,52.7 157.9,60.2M174.0,72.9Q184.9,72.2 195.8,72.7M174.0,72.9Q179.2,81.3 182.3,90.7M182.3,90.7Q191.7,91.2 198.5,84.6M182.3,90.7Q179.1,103.3 169.2,112.0M169.2,112.0Q184.8,109.8 200.1,106.2M169.2,112.0Q174.2,125.2 175.1,139.3M169.2,112.0Q184.7,121.1 202.3,124.7M175.1,139.3Q188.6,131.7 202.3,124.7M175.1,139.3Q178.0,148.2 173.8,156.6M173.8,156.6Q188.4,153.9 203.2,155.1M178.1,174.0Q187.9,176.6 195.7,183.0M176.4,200.8Q185.6,198.1 194.2,193.9M182.5,220.0Q187.1,216.9 191.1,220.8M182.5,220.0Q190.3,233.9 202.1,244.8M173.8,249.6Q188.5,250.3 202.1,244.8M173.8,249.6Q167.1,258.7 161.5,268.6M168.9,269.4Q182.7,267.1 196.6,268.9M168.9,269.4Q161.1,281.8 150.0,291.4M178.9,286.9Q185.5,285.5 191.8,282.9M178.9,286.9Q177.5,299.5 175.2,312.0M178.9,286.9Q163.5,293.5 149.7,303.2M175.2,312.0Q187.3,317.3 200.3,315.5M182.3,333.7Q191.2,332.7 200.1,333.1M182.3,333.7Q180.0,338.9 180.0,344.6M182.3,333.7Q170.1,348.4 153.9,358.5M180.0,344.6Q191.8,344.9 202.4,350.3M180.0,344.6Q175.7,356.1 173.2,368.2M173.2,368.2Q188.9,373.7 205.0,377.9M173.2,368.2Q176.1,385.9 183.2,402.3M173.2,368.2Q185.8,380.0 195.5,394.3M183.2,402.3Q178.7,412.3 170.3,419.4M183.2,402.3Q194.4,407.0 202.9,415.6M170.3,419.4Q186.8,419.6 202.9,415.6M170.3,419.4Q173.9,426.0 177.2,432.7M177.2,432.7Q172.4,449.1 174.3,466.0M177.2,432.7Q184.8,449.8 198.5,462.3M174.3,466.0Q178.0,472.7 178.3,480.5M174.3,466.0Q185.4,480.5 200.7,490.4M178.3,480.5Q179.0,491.6 180.2,502.7M178.3,480.5Q187.4,490.6 192.1,503.4M180.2,502.7Q182.4,515.3 176.7,526.7M176.7,526.7Q183.9,524.8 191.1,526.6M176.7,526.7Q177.7,540.2 183.7,552.4M183.7,552.4Q191.2,552.4 198.0,555.6M183.7,552.4Q183.5,563.8 180.9,574.8M180.9,574.8Q172.2,586.6 159.0,592.7M174.1,601.4Q184.8,596.4 196.5,595.2M174.1,601.4Q174.3,611.0 179.4,619.1M179.4,619.1Q186.2,624.1 194.4,621.5M179.4,619.1Q163.6,622.8 151.4,633.4M172.4,632.6Q186.6,640.6 202.6,643.4M172.4,632.6Q173.6,649.1 177.2,665.2M177.2,665.2Q184.3,660.8 192.4,662.7M177.2,665.2Q176.6,673.0 180.7,679.6M180.7,679.6Q177.1,692.6 170.2,704.3M180.7,679.6Q189.5,697.3 204.4,710.4M180.7,679.6Q163.6,689.2 147.4,700.3M170.2,704.3Q187.7,704.9 204.4,710.4M170.2,704.3Q173.3,714.4 182.0,720.6M170.2,704.3Q187.8,715.7 201.9,731.1M182.0,720.6Q183.5,731.9 179.8,742.7M182.0,720.6Q171.4,738.4 156.6,752.9M179.8,742.7Q190.0,748.5 200.4,754.1M179.8,742.7Q176.0,752.7 173.0,762.9M173.0,762.9Q184.3,764.8 192.1,773.3M173.0,762.9Q188.2,777.3 201.3,793.8M173.0,762.9Q159.2,779.5 146.7,797.2M172.8,790.1Q179.7,805.2 183.5,821.4M183.5,821.4Q190.1,815.1 194.4,807.1M183.5,821.4Q171.8,826.5 161.3,833.8M171.0,833.0Q186.1,834.3 199.7,841.2M171.0,833.0Q177.7,842.7 183.1,853.2M171.0,833.0Q183.3,842.5 194.4,853.4M183.1,853.2Q188.8,852.5 194.4,853.4M183.1,853.2Q189.6,862.7 193.6,873.5M169.7,898.2Q175.0,909.6 174.3,922.2M169.7,898.2Q188.2,907.3 202.8,921.8M174.3,922.2Q188.6,921.2 202.8,921.8M174.3,922.2Q181.8,930.9 183.4,942.3M183.4,942.3Q170.0,950.8 159.3,962.6M171.3,974.5Q174.5,984.7 175.2,995.4M171.3,974.5Q178.8,985.2 190.1,992.1M175.2,995.4Q178.1,1005.7 178.2,1016.5M195.0,-27.6Q203.6,-23.7 212.9,-22.9M195.0,-27.6Q195.8,-13.3 202.1,-0.5M202.1,-0.5Q212.0,0.5 220.9,4.9M198.9,24.7Q206.2,23.6 212.6,27.2M198.9,24.7Q204.6,33.9 213.8,39.6M202.0,40.4Q207.9,40.3 213.8,39.6M202.0,40.4Q198.5,56.5 195.8,72.7M202.0,40.4Q209.5,54.1 222.1,63.4M202.0,40.4Q190.2,58.5 174.0,72.9M195.8,72.7Q194.7,79.2 198.5,84.6M198.5,84.6Q208.8,83.0 217.3,89.1M198.5,84.6Q197.1,95.6 200.1,106.2M198.5,84.6Q206.8,99.8 215.5,114.7M200.1,106.2Q207.7,110.6 215.5,114.7M202.3,124.7Q210.1,129.8 215.3,137.4M203.2,155.1Q214.1,156.7 224.9,154.6M203.2,155.1Q197.1,168.4 195.7,183.0M195.7,183.0Q194.5,188.4 194.2,193.9M194.2,193.9Q189.5,207.0 191.1,220.8M191.1,220.8Q197.8,232.3 202.1,244.8M202.1,244.8Q211.9,249.2 222.1,245.6M202.1,244.8Q202.9,257.7 196.6,268.9M202.1,244.8Q214.0,251.1 221.4,262.4M196.6,268.9Q208.5,263.8 221.4,262.4M196.6,268.9Q197.4,277.0 191.8,282.9M191.8,282.9Q206.1,284.7 220.2,287.4M191.8,282.9Q195.3,299.4 200.3,315.5M200.3,315.5Q193.4,326.7 182.3,333.7M200.1,333.1Q214.2,331.0 227.9,334.9M200.1,333.1Q197.4,342.2 202.4,350.3M202.4,350.3Q214.8,347.6 227.4,349.3M202.4,350.3Q205.5,363.9 205.0,377.9M202.4,350.3Q215.0,358.9 227.8,367.1M205.0,377.9Q199.6,385.7 195.5,394.3M205.0,377.9Q211.1,385.4 219.6,390.1M195.5,394.3Q199.5,404.8 202.9,415.6M195.5,394.3Q210.1,405.2 219.3,420.9M202.9,415.6Q211.9,415.9 219.3,420.9M193.0,445.9Q198.2,453.3 198.5,462.3M193.0,445.9Q204.4,453.2 217.5,457.0M198.5,462.3Q206.9,455.9 217.5,457.0M198.5,462.3Q200.8,476.3 200.7,490.4M198.5,462.3Q186.5,469.4 178.3,480.5M200.7,490.4Q211.2,488.3 218.4,480.5M200.7,490.4Q197.7,497.8 192.1,503.4M200.7,490.4Q204.9,502.3 215.1,509.8M192.1,503.4Q191.3,515.0 191.1,526.6M191.1,526.6Q195.5,540.9 198.0,555.6M198.0,555.6Q203.1,563.9 200.7,573.2M198.0,555.6Q189.1,564.9 180.9,574.8M200.7,573.2Q208.1,571.3 215.1,568.2M196.5,595.2Q208.5,598.8 221.0,597.2M196.5,595.2Q196.1,608.4 194.4,621.5M196.5,595.2Q188.8,607.7 179.4,619.1M194.4,621.5Q210.9,618.6 227.6,620.0M194.4,621.5Q181.9,624.1 172.4,632.6M202.6,643.4Q214.8,645.6 227.2,644.7M202.6,643.4Q200.0,654.4 192.4,662.7M202.6,643.4Q210.3,656.3 223.6,663.5M192.4,662.7Q207.9,665.5 223.6,663.5M202.1,682.0Q207.6,679.8 213.0,677.3M204.4,710.4Q202.7,720.7 201.9,731.1M204.4,710.4Q192.0,712.9 182.0,720.6M201.9,731.1Q212.8,729.9 223.6,728.1M201.9,731.1Q204.0,742.8 200.4,754.1M200.4,754.1Q208.0,749.2 216.2,745.7M200.4,754.1Q196.8,763.9 192.1,773.3M200.4,754.1Q210.1,761.1 214.6,772.1M192.1,773.3Q203.3,770.7 214.6,772.1M201.3,793.8Q213.8,787.5 227.9,788.9M194.4,807.1Q203.6,807.4 212.7,808.8M194.4,807.1Q196.3,824.2 199.7,841.2M194.4,807.1Q185.2,822.3 171.0,833.0M199.7,841.2Q199.0,848.2 194.4,853.4M194.4,853.4Q209.8,853.9 224.9,857.3M194.4,853.4Q196.7,863.6 193.6,873.5M193.6,873.5Q203.6,876.0 213.6,873.7M193.6,873.5Q200.3,890.9 200.8,909.6M200.8,909.6Q199.9,916.0 202.8,921.8M202.8,921.8Q210.7,927.6 219.5,931.8M201.2,939.2Q202.9,952.1 203.4,965.2M201.2,939.2Q210.7,956.0 219.6,973.2M190.1,992.1Q202.4,988.9 214.1,983.7M190.1,992.1Q204.7,1003.4 221.0,1012.1M192.2,1008.4Q206.2,1013.7 221.0,1012.1M212.9,-22.9Q225.3,-23.2 237.3,-26.0M212.9,-22.9Q224.6,-8.9 234.3,6.5M220.9,4.9Q227.8,4.2 234.3,6.5M220.9,4.9Q214.9,15.4 212.6,27.2M212.6,27.2Q216.6,33.1 213.8,39.6M212.6,27.2Q231.4,34.6 249.7,43.0M212.6,27.2Q207.2,33.7 202.0,40.4M213.8,39.6Q232.0,38.9 249.7,43.0M222.1,63.4Q233.9,64.8 245.7,64.1M222.1,63.4Q221.5,76.6 217.3,89.1M222.1,63.4Q211.6,75.5 198.5,84.6M217.3,89.1Q231.7,94.3 247.0,93.5M217.3,89.1Q220.1,102.2 215.5,114.7M217.3,89.1Q226.2,96.4 236.1,102.2M215.5,114.7Q227.0,110.4 236.1,102.2M215.5,114.7Q215.2,126.1 215.3,137.4M224.9,154.6Q222.1,169.1 212.5,180.4M212.5,180.4Q229.9,179.0 247.3,180.6M212.5,180.4Q209.1,189.3 212.5,198.1M212.5,180.4Q204.1,188.2 194.2,193.9M212.5,198.1Q226.1,191.0 241.4,190.7M218.8,213.0Q233.7,216.1 248.2,220.5M218.8,213.0Q218.6,229.5 222.1,245.6M222.1,245.6Q225.6,254.2 221.4,262.4M222.1,245.6Q231.0,259.7 244.0,270.2M221.4,262.4Q233.4,264.3 244.0,270.2M221.4,262.4Q232.7,274.4 241.8,288.2M221.4,262.4Q204.4,269.5 191.8,282.9M220.2,287.4Q230.9,290.0 241.8,288.2M215.6,313.9Q206.3,322.2 200.1,333.1M227.9,334.9Q237.8,330.2 248.5,328.1M227.9,334.9Q223.8,341.9 227.4,349.3M227.9,334.9Q232.3,344.0 235.7,353.5M227.9,334.9Q213.1,339.2 202.4,350.3M227.4,349.3Q230.8,352.8 235.7,353.5M227.4,349.3Q225.4,358.3 227.8,367.1M219.3,420.9Q231.8,417.7 244.2,421.3M219.3,420.9Q222.8,429.8 223.3,439.3M219.3,420.9Q231.9,423.8 241.0,433.1M223.3,439.3Q222.6,448.9 217.5,457.0M217.5,457.0Q231.4,453.8 245.6,454.9M217.5,457.0Q218.8,468.7 218.4,480.5M217.5,457.0Q231.5,467.8 241.5,482.4M218.4,480.5Q229.7,484.9 241.5,482.4M218.4,480.5Q218.7,495.4 215.1,509.8M218.4,480.5Q206.3,493.2 192.1,503.4M215.1,509.8Q229.9,509.5 244.8,509.4M220.3,527.0Q228.6,530.9 237.8,530.4M220.3,527.0Q221.6,540.9 215.2,553.3M215.2,553.3Q229.7,548.3 245.1,549.5M215.2,553.3Q213.9,560.8 215.1,568.2M215.2,553.3Q228.7,563.4 236.3,578.5M215.1,568.2Q226.6,571.7 236.3,578.5M215.1,568.2Q220.4,582.3 221.0,597.2M215.1,568.2Q230.4,576.0 243.6,587.0M215.1,568.2Q207.0,582.5 196.5,595.2M221.0,597.2Q231.8,591.1 243.6,587.0M221.0,597.2Q228.0,607.5 227.6,620.0M227.6,620.0Q234.1,618.1 237.8,623.8M227.6,620.0Q224.2,632.3 227.2,644.7M227.6,620.0Q213.3,629.8 202.6,643.4M227.2,644.7Q225.4,654.1 223.6,663.5M227.2,644.7Q210.5,655.0 192.4,662.7M223.6,663.5Q235.0,665.7 246.6,665.2M223.6,663.5Q217.5,669.8 213.0,677.3M223.6,663.5Q215.3,675.7 202.1,682.0M213.0,677.3Q206.6,693.3 204.4,710.4M212.2,709.8Q222.8,702.6 234.6,697.5M212.2,709.8Q215.4,720.5 223.6,728.1M223.6,728.1Q236.2,732.9 249.6,730.8M223.6,728.1Q219.3,736.7 216.2,745.7M223.6,728.1Q212.7,741.7 200.4,754.1M216.2,745.7Q226.0,745.5 234.6,740.8M216.2,745.7Q218.3,759.1 214.6,772.1M216.2,745.7Q226.1,761.9 237.8,776.9M214.6,772.1Q225.7,777.3 237.8,776.9M214.6,772.1Q225.9,783.6 237.5,794.8M214.6,772.1Q209.7,784.0 201.3,793.8M227.9,788.9Q234.4,788.9 237.5,794.8M227.9,788.9Q217.8,797.0 212.7,808.8M227.9,788.9Q212.2,800.0 194.4,807.1M212.7,808.8Q230.7,812.7 248.9,816.2M212.7,808.8Q218.4,825.1 217.7,842.4M217.7,842.4Q233.9,839.4 248.7,832.2M217.7,842.4Q220.6,850.1 224.9,857.3M224.9,857.3Q219.8,865.8 213.6,873.7M214.5,906.4Q232.1,909.6 249.6,905.4M214.5,906.4Q208.2,913.8 202.8,921.8M219.5,931.8Q227.9,928.3 237.0,928.9M219.5,931.8Q227.0,940.3 236.6,946.2M226.6,950.7Q232.3,950.0 236.6,946.2M219.6,973.2Q215.6,977.8 214.1,983.7M214.1,983.7Q231.5,989.1 248.2,996.7M214.1,983.7Q217.8,997.9 221.0,1012.1M221.0,1012.1Q227.6,1014.8 234.0,1017.6M237.3,-26.0Q251.9,-23.9 264.9,-16.9M237.3,-26.0Q237.1,-9.6 234.3,6.5M234.3,6.5Q248.7,1.3 264.0,1.9M234.3,6.5Q239.4,18.0 245.4,29.1M234.3,6.5Q224.3,17.7 212.6,27.2M245.4,29.1Q255.7,29.9 265.5,26.8M245.4,29.1Q245.3,36.8 249.7,43.0M245.4,29.1Q252.9,30.5 257.2,36.9M245.4,29.1Q229.9,35.4 213.8,39.6M249.7,43.0Q252.9,39.2 257.2,36.9M245.7,64.1Q245.6,78.8 247.0,93.5M247.0,93.5Q257.1,89.6 262.4,80.1M247.0,93.5Q241.2,97.3 236.1,102.2M247.0,93.5Q256.7,99.7 267.9,102.4M236.1,102.2Q252.0,100.6 267.9,102.4M236.1,102.2Q223.0,118.2 215.3,137.4M237.4,133.4Q253.6,133.4 269.3,137.0M237.4,133.4Q235.0,140.5 240.1,146.1M237.4,133.4Q251.5,138.6 263.3,148.0M240.1,146.1Q251.7,146.4 263.3,148.0M247.3,180.6Q258.2,178.8 266.4,171.3M247.3,180.6Q242.2,184.4 241.4,190.7M241.4,190.7Q252.2,189.3 262.9,191.8M241.4,190.7Q244.8,205.6 248.2,220.5M241.4,190.7Q258.4,203.8 271.6,220.7M248.2,220.5Q259.9,223.5 271.6,220.7M248.2,220.5Q241.8,230.0 235.1,239.2M248.2,220.5Q236.5,234.4 222.1,245.6M244.0,270.2Q230.3,276.4 220.2,287.4M241.8,288.2Q255.0,281.9 269.6,279.6M241.8,288.2Q239.4,296.0 237.3,303.9M237.3,303.9Q249.7,301.5 261.9,304.8M235.7,353.5Q250.9,355.7 265.7,359.7M235.7,353.5Q237.8,361.3 236.0,369.2M236.0,369.2Q252.2,367.7 268.3,366.1M241.3,397.4Q249.1,393.3 257.2,389.8M241.3,397.4Q240.5,409.6 244.2,421.3M241.3,397.4Q255.3,407.1 267.1,419.6M244.2,421.3Q255.7,421.3 267.1,419.6M244.2,421.3Q240.7,426.7 241.0,433.1M241.0,433.1Q251.9,439.1 264.3,439.3M241.0,433.1Q246.9,443.2 245.6,454.9M241.0,433.1Q254.6,446.5 262.5,463.8M245.6,454.9Q241.8,468.4 241.5,482.4M245.6,454.9Q255.9,472.8 266.4,490.7M241.5,482.4Q253.8,487.1 266.4,490.7M241.5,482.4Q244.5,495.7 244.8,509.4M244.8,509.4Q256.4,506.9 267.7,510.7M244.8,509.4Q243.1,520.5 237.8,530.4M237.8,530.4Q251.8,538.6 267.5,542.5M245.1,549.5Q257.5,549.8 267.5,542.5M245.1,549.5Q243.6,564.9 236.3,578.5M245.1,549.5Q258.3,561.8 266.9,577.6M236.3,578.5Q251.7,580.9 266.9,577.6M236.3,578.5Q242.9,580.2 243.6,587.0M236.3,578.5Q230.1,589.1 221.0,597.2M243.6,587.0Q238.4,605.0 237.8,623.8M237.8,623.8Q248.2,619.5 258.9,623.1M237.8,623.8Q236.8,630.0 237.7,636.3M237.7,636.3Q250.8,636.6 263.1,641.3M237.7,636.3Q251.0,644.2 260.0,656.8M237.7,636.3Q228.5,648.8 223.6,663.5M246.6,665.2Q252.7,660.0 260.0,656.8M246.6,665.2Q229.6,670.7 213.0,677.3M244.1,685.9Q239.8,692.0 234.6,697.5M234.6,697.5Q246.7,697.8 257.5,703.1M234.6,697.5Q243.4,713.6 249.6,730.8M249.6,730.8Q260.7,729.7 271.7,728.5M249.6,730.8Q241.7,735.2 234.6,740.8M234.6,740.8Q253.3,744.9 270.9,752.2M234.6,740.8Q236.1,758.8 237.8,776.9M234.6,740.8Q222.8,755.3 214.6,772.1M237.8,776.9Q253.7,776.2 269.4,777.9M237.8,776.9Q235.0,785.8 237.5,794.8M237.5,794.8Q252.1,788.2 268.0,788.4M237.5,794.8Q246.6,803.7 248.9,816.2M248.9,816.2Q254.3,814.0 260.0,812.6M248.9,816.2Q253.6,823.5 256.3,831.7M248.7,832.2Q245.2,843.0 236.5,850.3M248.7,832.2Q261.1,847.4 270.2,864.7M248.7,832.2Q236.0,844.0 224.9,857.3M236.5,850.3Q252.0,860.6 270.2,864.7M236.5,850.3Q238.2,863.3 246.1,873.7M246.1,873.7Q253.9,878.8 261.3,884.3M246.1,873.7Q231.1,890.9 214.5,906.4M249.6,905.4Q258.8,907.8 268.4,908.2M249.6,905.4Q243.5,917.2 237.0,928.9M237.0,928.9Q252.3,923.0 268.7,924.5M236.6,946.2Q248.0,945.1 257.7,951.2M236.6,946.2Q233.5,959.3 235.7,972.6M236.6,946.2Q230.7,961.3 219.6,973.2M235.7,972.6Q244.3,983.4 248.2,996.7M248.2,996.7Q239.1,1005.8 234.0,1017.6M248.2,996.7Q260.0,1001.4 271.5,1006.6M234.0,1017.6Q251.9,1009.4 271.5,1006.6M264.9,-16.9Q278.3,-7.3 286.6,7.0M264.0,1.9Q261.8,14.5 265.5,26.8M264.0,1.9Q273.8,15.6 284.5,28.6M264.0,1.9Q255.8,16.3 245.4,29.1M265.5,26.8Q275.0,27.4 284.5,28.6M265.5,26.8Q260.4,31.0 257.2,36.9M257.2,36.9Q258.2,50.6 264.7,62.7M264.7,62.7Q271.8,58.7 279.4,61.4M264.7,62.7Q270.3,80.5 282.6,94.5M262.4,80.1Q266.5,90.9 267.9,102.4M267.9,102.4Q273.7,102.6 278.2,106.2M267.9,102.4Q266.9,119.8 269.3,137.0M267.9,102.4Q281.1,119.7 289.5,139.8M269.3,137.0Q267.9,143.3 263.3,148.0M269.3,137.0Q254.0,139.5 240.1,146.1M263.3,148.0Q273.0,147.3 280.8,153.0M263.3,148.0Q261.9,160.0 266.4,171.3M263.3,148.0Q253.8,163.5 247.3,180.6M266.4,171.3Q277.7,175.0 289.0,179.1M266.4,171.3Q253.0,179.8 241.4,190.7M262.9,191.8Q276.9,195.5 289.9,202.1M271.6,220.7Q267.4,228.6 261.6,235.5M271.6,220.7Q253.9,231.0 235.1,239.2M261.6,235.5Q268.1,243.7 278.4,245.1M261.6,235.5Q250.3,251.5 244.0,270.2M267.7,269.6Q275.9,266.9 281.3,260.2M269.6,279.6Q280.6,286.5 293.4,288.3M269.6,279.6Q263.8,291.6 261.9,304.8M269.6,279.6Q253.9,292.3 237.3,303.9M261.9,304.8Q275.4,304.4 287.5,310.5M268.2,324.4Q276.6,331.5 287.6,333.1M268.2,324.4Q268.1,342.1 265.7,359.7M265.7,359.7Q273.0,350.9 282.9,345.0M265.7,359.7Q265.7,363.4 268.3,366.1M268.3,366.1Q275.9,378.3 283.8,390.3M268.3,366.1Q255.7,382.5 241.3,397.4M257.2,389.8Q270.5,390.1 283.8,390.3M267.1,419.6Q273.9,422.2 279.8,417.9M267.1,419.6Q263.0,429.1 264.3,439.3M267.1,419.6Q252.4,423.1 241.0,433.1M264.3,439.3Q279.0,440.3 293.5,443.0M264.3,439.3Q262.6,451.5 262.5,463.8M262.5,463.8Q268.3,476.7 266.4,490.7M266.4,490.7Q270.4,500.5 267.7,510.7M267.7,510.7Q276.7,511.1 282.9,504.5M267.7,510.7Q268.1,522.2 270.6,533.4M267.7,510.7Q278.1,519.3 289.0,527.1M270.6,533.4Q280.5,532.2 289.0,527.1M266.9,577.6Q263.6,588.6 262.9,600.1M266.9,577.6Q279.5,580.8 291.3,586.5M262.9,600.1Q275.6,609.5 291.3,611.6M262.9,600.1Q252.8,614.5 237.8,623.8M258.9,623.1Q273.9,614.2 291.3,611.6M263.1,641.3Q260.5,648.9 260.0,656.8M260.0,656.8Q260.6,668.0 261.6,679.2M260.0,656.8Q254.6,672.7 244.1,685.9M261.6,679.2Q270.2,680.5 278.2,677.0M261.6,679.2Q263.0,691.7 257.5,703.1M261.6,679.2Q246.4,685.8 234.6,697.5M257.5,703.1Q275.2,702.0 292.5,698.5M257.5,703.1Q266.3,714.8 271.7,728.5M271.7,728.5Q280.1,727.3 288.5,727.4M271.7,728.5Q271.1,740.3 270.9,752.2M271.7,728.5Q277.8,738.4 288.6,742.9M271.7,728.5Q254.1,737.4 234.6,740.8M270.9,752.2Q279.2,746.5 288.6,742.9M270.9,752.2Q274.5,758.8 280.3,763.6M269.4,777.9Q269.2,783.2 268.0,788.4M268.0,788.4Q280.8,790.6 293.7,790.1M268.0,788.4Q262.4,800.0 260.0,812.6M268.0,788.4Q278.5,801.5 288.4,815.1M260.0,812.6Q257.0,824.0 248.7,832.2M256.3,831.7Q268.7,827.8 281.6,829.0M256.3,831.7Q262.1,848.7 270.2,864.7M270.2,864.7Q273.9,862.2 278.2,863.6M270.2,864.7Q268.3,875.7 261.3,884.3M261.3,884.3Q270.3,888.3 280.1,887.4M268.4,908.2Q271.8,916.3 268.7,924.5M268.7,924.5Q274.1,927.6 280.2,928.6M268.7,924.5Q261.2,937.0 257.7,951.2M257.7,951.2Q269.9,947.6 282.0,943.9M257.7,951.2Q261.6,960.2 261.0,970.0M257.7,951.2Q271.5,957.9 286.4,961.8M261.9,990.6Q269.2,997.1 271.5,1006.6M271.5,1006.6Q276.7,1009.2 282.6,1010.1M286.5,-19.6Q287.2,-6.3 286.6,7.0M286.5,-19.6Q275.0,-9.1 264.0,1.9M286.6,7.0Q288.6,18.1 284.5,28.6M284.5,28.6Q283.8,40.6 289.0,51.5M284.5,28.6Q270.7,32.2 257.2,36.9M289.0,51.5Q282.3,54.6 279.4,61.4M289.0,51.5Q276.4,56.0 264.7,62.7M279.4,61.4Q282.4,77.8 282.6,94.5M279.4,61.4Q271.0,70.8 262.4,80.1M282.6,94.5Q278.0,99.4 278.2,106.2M282.6,94.5Q276.4,100.7 267.9,102.4M278.2,106.2Q281.5,123.8 289.5,139.8M278.2,106.2Q272.7,121.3 269.3,137.0M289.5,139.8Q287.9,148.3 280.8,153.0M280.8,153.0Q287.9,165.1 289.0,179.1M289.9,202.1Q286.5,209.4 282.0,216.1M282.0,216.1Q277.2,230.2 278.4,245.1M278.4,245.1Q281.6,252.3 281.3,260.2M278.4,245.1Q269.9,255.9 267.7,269.6M293.4,288.3Q290.0,299.3 287.5,310.5M293.4,288.3Q279.4,299.9 261.9,304.8M287.5,310.5Q277.5,317.0 268.2,324.4M287.6,333.1Q288.8,340.5 282.9,345.0M287.6,333.1Q275.7,345.6 265.7,359.7M282.9,345.0Q277.1,354.9 279.1,366.2M279.1,366.2Q285.2,377.5 283.8,390.3M283.8,390.3Q279.0,403.7 279.8,417.9M283.8,390.3Q273.1,403.6 267.1,419.6M279.8,417.9Q288.6,429.4 293.5,443.0M293.5,443.0Q287.4,454.4 282.4,466.3M293.5,443.0Q277.1,452.0 262.5,463.8M282.4,466.3Q280.1,471.8 280.8,477.6M282.9,504.5Q284.5,516.2 289.0,527.1M292.9,569.5Q288.9,577.7 291.3,586.5M288.7,656.4Q284.2,667.1 278.2,677.0M292.5,698.5Q285.3,715.7 271.7,728.5M288.5,727.4Q291.8,735.1 288.6,742.9M288.6,742.9Q281.6,752.1 280.3,763.6M288.6,742.9Q281.6,761.8 269.4,777.9M293.7,790.1Q290.3,802.5 288.4,815.1M281.6,829.0Q280.2,846.4 278.2,863.6M278.2,863.6Q268.6,873.0 261.3,884.3M283.8,905.6Q283.2,917.3 280.2,928.6M283.8,905.6Q278.8,917.1 268.7,924.5M280.2,928.6Q278.1,936.6 282.0,943.9M282.0,943.9Q282.3,953.3 286.4,961.8M286.4,961.8Q281.3,977.9 282.0,994.7M286.4,961.8Q275.1,977.0 261.9,990.6M282.0,994.7Q280.5,1002.5 282.6,1010.1" fill="none" stroke="#b7c1de" stroke-width="0.6"/>
<polyline points="136.7,47.1 165.0,33.0" fill="none" stroke="#aeb8dc" stroke-width="0.7"/>
<polyline points="153.2,47.1 165.0,94.3 169.7,132.0" fill="none" stroke="#aeb8dc" stroke-width="0.7"/>
<polyline points="122.6,33.0 141.4,56.6 146.2,94.3" fill="none" stroke="#aeb8dc" stroke-width="0.7"/>
<polyline points="212.2,28.3 231.0,47.1" fill="none" stroke="#aeb8dc" stroke-width="0.7"/>
<polyline points="224.0,42.4 207.4,70.7" fill="none" stroke="#aeb8dc" stroke-width="0.7"/>
<polyline points="165.0,94.3 212.2,99.0" fill="none" stroke="#aeb8dc" stroke-width="0.7"/>
<polyline points="146.2,94.3 188.6,89.6" fill="none" stroke="#aeb8dc" stroke-width="0.7"/>
<polyline points="212.2,113.2 256.0,110.8" fill="none" stroke="#aeb8dc" stroke-width="0.7"/>
<polyline points="207.4,150.9 235.7,165.0 256.0,169.7" fill="none" stroke="#aeb8dc" stroke-width="0.7"/>
<polyline points="183.9,165.0 165.0,193.3 179.2,224.0" fill="none" stroke="#aeb8dc" stroke-width="0.7"/>
<polyline points="212.2,169.7 219.2,212.2 256.0,235.7" fill="none" stroke="#aeb8dc" stroke-width="0.7"/>
<polyline points="179.2,224.0 202.7,226.3 235.7,256.0" fill="none" stroke="#aeb8dc" stroke-width="0.7"/>
<polyline points="160.3,179.2 193.3,179.2" fill="none" stroke="#aeb8dc" stroke-width="0.7"/>
<polyline points="136.7,132.0 150.9,165.0" fill="none" stroke="#aeb8dc" stroke-width="0.7"/>
<polyline points="0.0,350.3 23.6,345.6 47.1,364.4 70.7,369.2" fill="none" stroke="#aeb8dc" stroke-width="0.7"/>
<polyline points="23.6,340.9 42.4,378.6 70.7,388.0" fill="none" stroke="#aeb8dc" stroke-width="0.7"/>
<polyline points="61.3,357.4 80.2,388.0" fill="none" stroke="#aeb8dc" stroke-width="0.7"/>
<polyline points="110.8,406.9 141.4,402.2 165.0,411.6 200.4,421.0" fill="none" stroke="#aeb8dc" stroke-width="0.7"/>
<polyline points="117.9,364.4 132.0,397.4 122.6,425.7" fill="none" stroke="#aeb8dc" stroke-width="0.7"/>
<polyline points="146.2,362.1 165.0,378.6 179.2,402.2" fill="none" stroke="#aeb8dc" stroke-width="0.7"/>
<polyline points="0.0,425.7 23.6,421.0 47.1,406.9" fill="none" stroke="#aeb8dc" stroke-width="0.7"/>
<polyline points="47.1,435.2 58.9,458.7 47.1,491.7" fill="none" stroke="#aeb8dc" stroke-width="0.7"/>
<polyline points="77.8,463.4 82.5,491.7 70.7,512.0" fill="none" stroke="#aeb8dc" stroke-width="0.7"/>
<polyline points="141.4,482.3 117.9,496.5 94.3,512.0" fill="none" stroke="#aeb8dc" stroke-width="0.7"/>
<polyline points="212.2,444.6 224.0,468.2 256.0,480.0" fill="none" stroke="#aeb8dc" stroke-width="0.7"/>
<polyline points="188.6,463.4 195.7,491.7" fill="none" stroke="#aeb8dc" stroke-width="0.7"/>
<polyline points="200.4,421.0 256.0,406.9" fill="none" stroke="#aeb8dc" stroke-width="0.7"/>
<polyline points="224.0,362.1 256.0,366.8" fill="none" stroke="#aeb8dc" stroke-width="0.7"/>
<polyline points="0.0,449.3 23.6,456.4 47.1,468.2" fill="none" stroke="#aeb8dc" stroke-width="0.7"/>
<polyline points="165.0,291.4 188.6,303.1 212.2,298.4" fill="none" stroke="#aeb8dc" stroke-width="0.7"/>
<polyline points="195.7,359.7 235.7,355.0" fill="none" stroke="#aeb8dc" stroke-width="0.7"/>
<polyline points="0.0,582.7 35.4,578.0 70.7,587.4 108.4,582.7" fill="none" stroke="#aeb8dc" stroke-width="0.7"/>
<polyline points="47.1,547.4 58.9,582.7 75.4,625.2" fill="none" stroke="#aeb8dc" stroke-width="0.7"/>
<polyline points="108.4,582.7 141.4,573.3 179.2,568.6 231.0,580.4" fill="none" stroke="#aeb8dc" stroke-width="0.7"/>
<polyline points="84.9,629.9 141.4,634.6 188.6,620.4" fill="none" stroke="#aeb8dc" stroke-width="0.7"/>
<polyline points="165.0,665.2 200.4,648.7 226.3,622.8" fill="none" stroke="#aeb8dc" stroke-width="0.7"/>
<polyline points="0.0,677.0 35.4,672.3" fill="none" stroke="#aeb8dc" stroke-width="0.7"/>
<polyline points="106.1,712.4 117.9,681.7 141.4,677.0 169.7,665.2" fill="none" stroke="#aeb8dc" stroke-width="0.7"/>
<polyline points="200.4,688.8 256.0,672.3" fill="none" stroke="#aeb8dc" stroke-width="0.7"/>
<polyline points="0.0,601.6 28.3,618.1 51.9,644.0" fill="none" stroke="#aeb8dc" stroke-width="0.7"/>
<polyline points="28.3,644.0 23.6,677.0 7.1,724.2" fill="none" stroke="#aeb8dc" stroke-width="0.7"/>
<polyline points="117.9,535.6 94.3,559.1 70.7,570.9" fill="none" stroke="#aeb8dc" stroke-width="0.7"/>
<polyline points="179.2,535.6 165.0,570.9" fill="none" stroke="#aeb8dc" stroke-width="0.7"/>
<polyline points="235.7,629.9 256.0,639.3" fill="none" stroke="#aeb8dc" stroke-width="0.7"/>
<polyline points="132.0,719.4 141.4,747.7" fill="none" stroke="#aeb8dc" stroke-width="0.7"/>
<polyline points="101.4,807.9 141.4,810.3 176.8,803.2" fill="none" stroke="#aeb8dc" stroke-width="0.7"/>
<polyline points="84.9,833.9 117.9,838.6 132.0,824.4" fill="none" stroke="#aeb8dc" stroke-width="0.7"/>
<polyline points="132.0,824.4 165.0,838.6 212.2,833.9" fill="none" stroke="#aeb8dc" stroke-width="0.7"/>
<polyline points="141.4,857.4 153.2,892.8 165.0,897.5" fill="none" stroke="#aeb8dc" stroke-width="0.7"/>
<polyline points="99.0,866.9 106.1,899.9 103.7,909.3" fill="none" stroke="#aeb8dc" stroke-width="0.7"/>
<polyline points="235.7,791.4 256.0,786.7" fill="none" stroke="#aeb8dc" stroke-width="0.7"/>
<polyline points="212.2,819.7 256.0,829.2" fill="none" stroke="#aeb8dc" stroke-width="0.7"/>
<polyline points="235.7,881.0 226.3,904.6 208.6,916.8" fill="none" stroke="#aeb8dc" stroke-width="0.7"/>
<polyline points="165.0,928.2 176.8,972.0" fill="none" stroke="#aeb8dc" stroke-width="0.7"/>
<polyline points="117.9,918.7 141.4,951.7" fill="none" stroke="#aeb8dc" stroke-width="0.7"/>
<polyline points="0.0,730.1 28.3,744.3" fill="none" stroke="#aeb8dc" stroke-width="0.7"/>
<polyline points="129.7,730.1 150.9,749.0 169.7,756.1" fill="none" stroke="#aeb8dc" stroke-width="0.7"/>
<polyline points="205.1,857.4 256.0,866.9" fill="none" stroke="#aeb8dc" stroke-width="0.7"/>
<polyline points="188.6,810.3 235.7,805.6" fill="none" stroke="#aeb8dc" stroke-width="0.7"/>
<polyline points="94.3,336.0 106.0,357.0 110.5,376.0 109.6,406.5 125.2,430.5 143.6,461.8" fill="none" stroke="#9ea8d7" stroke-width="1.6" stroke-linejoin="round"/>
<polyline points="0.0,397.3 24.0,413.9 46.0,436.0 60.8,445.2 70.0,459.9 84.7,469.1 110.5,476.5 140.0,483.9" fill="none" stroke="#9ea8d7" stroke-width="1.6" stroke-linejoin="round"/>
<polyline points="184.2,469.1 210.0,448.9 226.5,430.5 230.2,410.2 226.5,384.4 222.8,366.0" fill="none" stroke="#9ea8d7" stroke-width="1.6" stroke-linejoin="round"/>
<polyline points="184.2,494.9 202.6,496.8 221.0,502.3 256.0,506.0" fill="none" stroke="#9ea8d7" stroke-width="1.6" stroke-linejoin="round"/>
<polyline points="143.6,494.9 110.5,506.0 73.7,528.1 55.2,550.2 46.0,566.0 38.0,586.0" fill="none" stroke="#9ea8d7" stroke-width="1.6" stroke-linejoin="round"/>
<polyline points="143.6,509.6 128.9,531.7 117.9,566.0" fill="none" stroke="#9ea8d7" stroke-width="1.6" stroke-linejoin="round"/>
<polyline points="165.7,506.0 193.4,541.0 221.0,566.0" fill="none" stroke="#9ea8d7" stroke-width="1.6" stroke-linejoin="round"/>
<polyline points="0.0,469.1 49.7,471.0 77.3,465.4 110.5,476.5" fill="none" stroke="#9ea8d7" stroke-width="1.6" stroke-linejoin="round"/>
<polyline points="82.9,366.0 75.5,393.6 60.8,443.3 49.7,471.0 36.8,504.1 18.4,541.0 11.0,566.0" fill="none" stroke="#9ea8d7" stroke-width="1.6" stroke-linejoin="round"/>
<polyline points="0.0,402.8 36.8,399.1 77.3,391.8 82.9,366.0" fill="none" stroke="#9ea8d7" stroke-width="1.6" stroke-linejoin="round"/>
<polyline points="193.4,366.0 198.9,380.7 197.0,393.6 186.0,424.9 173.1,454.4" fill="none" stroke="#9ea8d7" stroke-width="1.6" stroke-linejoin="round"/>
<polyline points="109.6,406.5 143.0,404.0 183.0,416.0 210.0,448.9" fill="none" stroke="#9ea8d7" stroke-width="1.6" stroke-linejoin="round"/>
<polyline points="202.6,210.2 198.9,226.8 191.5,254.4 184.2,276.5 176.8,276.5" fill="none" stroke="#9ea8d7" stroke-width="1.6" stroke-linejoin="round"/>
<polyline points="202.6,210.2 211.8,236.0 221.0,252.6 237.6,261.8 256.0,261.8" fill="none" stroke="#9ea8d7" stroke-width="1.6" stroke-linejoin="round"/>
<polyline points="176.8,276.5 202.6,298.6 219.2,320.7" fill="none" stroke="#9ea8d7" stroke-width="1.6" stroke-linejoin="round"/>
<polyline points="246.8,269.1 239.4,291.2 219.2,320.7 224.7,339.1 222.8,366.0" fill="none" stroke="#9ea8d7" stroke-width="1.6" stroke-linejoin="round"/>
<polyline points="202.6,210.2 254.1,195.5" fill="none" stroke="#9ea8d7" stroke-width="1.6" stroke-linejoin="round"/>
<polyline points="184.2,166.0 193.4,193.6 202.6,210.2" fill="none" stroke="#9ea8d7" stroke-width="1.6" stroke-linejoin="round"/>
<polyline points="92.1,366.0 195.2,357.5 224.7,339.1" fill="none" stroke="#9ea8d7" stroke-width="1.6" stroke-linejoin="round"/>
<polyline points="75.5,630.5 82.9,636.0 127.1,636.0 158.4,624.9 202.6,613.9 217.3,610.2" fill="none" stroke="#9ea8d7" stroke-width="1.6" stroke-linejoin="round"/>
<polyline points="0.0,621.2 22.1,624.9 62.6,641.5 75.5,630.5" fill="none" stroke="#9ea8d7" stroke-width="1.6" stroke-linejoin="round"/>
<polyline points="167.8,33.0 174.4,47.1 186.2,58.9 198.0,70.7 209.8,77.8 224.0,94.3 233.4,110.8 242.8,127.3 256.0,134.4" fill="none" stroke="#9ea8d7" stroke-width="1.6" stroke-linejoin="round"/>
<polyline points="198.0,70.7 193.3,89.6 186.2,108.4 182.7,136.7 183.9,165.0 188.6,188.6 198.0,207.4 202.7,212.2" fill="none" stroke="#9ea8d7" stroke-width="1.6" stroke-linejoin="round"/>
<polyline points="130.8,70.0 134.4,94.3 139.1,108.4 155.6,120.2 181.5,136.7 202.7,132.0 235.7,141.4 256.0,132.0" fill="none" stroke="#9ea8d7" stroke-width="1.6" stroke-linejoin="round"/>
<polyline points="181.5,136.7 186.2,162.7 212.2,169.7 256.0,181.5" fill="none" stroke="#9ea8d7" stroke-width="1.6" stroke-linejoin="round"/>
<polyline points="256.0,205.1 202.7,212.2" fill="none" stroke="#9ea8d7" stroke-width="1.6" stroke-linejoin="round"/>
<polyline points="167.8,33.0 141.4,47.1 130.8,70.0" fill="none" stroke="#9ea8d7" stroke-width="1.6" stroke-linejoin="round"/>
<polyline points="167.8,33.0 188.6,30.6 235.7,25.9 256.0,21.2" fill="none" stroke="#9ea8d7" stroke-width="1.6" stroke-linejoin="round"/>
<polyline points="198.0,70.7 235.7,47.1" fill="none" stroke="#9ea8d7" stroke-width="1.6" stroke-linejoin="round"/>
<polyline points="179.2,256.0 186.2,284.3 202.7,300.8 219.2,322.0 224.0,338.5 226.3,362.1 229.8,392.7 231.0,411.6" fill="none" stroke="#9ea8d7" stroke-width="1.6" stroke-linejoin="round"/>
<polyline points="224.0,338.5 195.7,359.7 146.2,362.1 106.1,364.4 87.2,366.8 82.5,378.6" fill="none" stroke="#9ea8d7" stroke-width="1.6" stroke-linejoin="round"/>
<polyline points="2.4,336.2 28.3,338.5 47.1,359.7 61.3,357.4 77.8,345.6 94.3,340.9" fill="none" stroke="#9ea8d7" stroke-width="1.6" stroke-linejoin="round"/>
<polyline points="155.6,512.0 155.6,547.4 150.9,594.5 153.2,622.8 165.0,641.7 165.0,665.2 162.7,707.7 165.0,728.9 174.4,747.7 181.5,757.2" fill="none" stroke="#9ea8d7" stroke-width="1.6" stroke-linejoin="round"/>
<polyline points="143.8,519.1 122.6,552.1 110.8,582.7 99.0,613.4 77.8,627.5" fill="none" stroke="#9ea8d7" stroke-width="1.6" stroke-linejoin="round"/>
<polyline points="11.8,547.4 9.4,582.7 2.4,611.0 0.0,618.1" fill="none" stroke="#9ea8d7" stroke-width="1.6" stroke-linejoin="round"/>
<polyline points="75.4,629.9 82.5,653.4 82.5,677.0 73.1,695.9 56.6,717.1 49.5,740.7" fill="none" stroke="#9ea8d7" stroke-width="1.6" stroke-linejoin="round"/>
<polyline points="0.0,660.5 35.4,667.6 58.9,681.7 75.4,693.5 106.1,712.4 132.0,721.8 165.0,738.3 181.5,757.2" fill="none" stroke="#9ea8d7" stroke-width="1.6" stroke-linejoin="round"/>
<polyline points="188.6,743.0 212.2,724.2 235.7,710.0 256.0,705.3" fill="none" stroke="#9ea8d7" stroke-width="1.6" stroke-linejoin="round"/>
<polyline points="169.7,641.7 202.7,622.8 226.3,613.4 256.0,615.7" fill="none" stroke="#9ea8d7" stroke-width="1.6" stroke-linejoin="round"/>
<polyline points="188.6,540.3 221.6,559.1 231.0,580.4 256.0,582.7" fill="none" stroke="#9ea8d7" stroke-width="1.6" stroke-linejoin="round"/>
<polyline points="216.9,609.8 212.2,653.4 200.4,688.8 193.3,724.2" fill="none" stroke="#9ea8d7" stroke-width="1.6" stroke-linejoin="round"/>
<polyline points="0.0,653.4 70.7,644.0 77.8,627.5" fill="none" stroke="#9ea8d7" stroke-width="1.6" stroke-linejoin="round"/>
<polyline points="0.0,719.4 23.6,728.9 50.0,740.7 94.3,724.2 106.1,712.4" fill="none" stroke="#9ea8d7" stroke-width="1.6" stroke-linejoin="round"/>
<polyline points="188.6,770.2 198.0,789.1 214.5,810.3 224.0,829.2 228.7,848.0 231.0,862.2 242.8,881.0 256.0,895.2" fill="none" stroke="#9ea8d7" stroke-width="1.6" stroke-linejoin="round"/>
<polyline points="188.6,772.6 188.6,810.3 193.3,845.7 205.1,881.0 207.4,916.4 207.4,951.7 209.8,972.0" fill="none" stroke="#9ea8d7" stroke-width="1.6" stroke-linejoin="round"/>
<polyline points="183.9,774.9 165.0,800.9 132.0,824.4 120.2,848.0 117.2,866.9" fill="none" stroke="#9ea8d7" stroke-width="1.6" stroke-linejoin="round"/>
<polyline points="165.0,770.2 129.7,767.9 99.0,782.0 77.8,786.7" fill="none" stroke="#9ea8d7" stroke-width="1.6" stroke-linejoin="round"/>
<polyline points="58.9,739.6 61.3,763.1 70.7,786.7 99.0,807.9 101.4,833.9 89.6,848.0 70.7,857.4 66.0,881.0" fill="none" stroke="#9ea8d7" stroke-width="1.6" stroke-linejoin="round"/>
<polyline points="117.2,866.9 141.4,857.4 188.6,850.4 256.0,833.9" fill="none" stroke="#9ea8d7" stroke-width="1.6" stroke-linejoin="round"/>
<polyline points="80.9,881.7 117.9,881.0 165.0,897.5 207.4,916.4" fill="none" stroke="#9ea8d7" stroke-width="1.6" stroke-linejoin="round"/>
<polyline points="208.6,916.8 176.8,928.2 153.2,944.7 141.4,963.5" fill="none" stroke="#9ea8d7" stroke-width="1.6" stroke-linejoin="round"/>
<polyline points="208.6,916.8 256.0,942.3" fill="none" stroke="#9ea8d7" stroke-width="1.6" stroke-linejoin="round"/>
<polyline points="188.6,772.6 235.7,774.9 256.0,777.3" fill="none" stroke="#9ea8d7" stroke-width="1.6" stroke-linejoin="round"/>
<polygon points="0.0,0.0 256.0,0.0 256.0,98.0 246.9,85.7 238.6,75.8 232.8,64.1 230.3,57.5 231.1,56.0 238.4,48.5 239.4,46.4 246.1,41.2 246.6,26.0 243.0,17.0 221.9,11.3 213.6,10.3 208.5,11.3 202.3,14.9 198.2,13.9 196.1,18.6 193.0,22.2 183.2,24.8 174.2,27.1 167.5,27.1 160.7,24.3 149.4,22.6 138.1,19.2 126.8,16.9 125.7,11.3 121.2,7.9 104.3,4.5 103.2,11.3 106.0,23.6 118.0,47.0 115.5,63.6 119.0,70.0 123.4,76.0 126.1,90.7 127.0,103.6 129.8,111.0 142.7,120.2 151.9,133.1 161.1,146.0 166.6,157.0 170.3,171.7 172.1,190.1 172.1,204.8 175.8,221.4 179.5,236.1 179.5,254.5 175.4,266.0 177.1,276.6 178.9,289.0 178.9,301.4 186.0,312.1 194.9,322.7 209.0,331.5 194.9,336.0 177.1,335.1 168.3,338.6 154.1,343.1 134.6,344.0 124.0,340.4 122.2,324.5 124.0,316.5 106.3,320.9 99.2,324.5 92.1,331.5 88.6,340.4 78.0,336.9 65.5,338.6 60.2,345.7 53.1,352.8 47.8,340.4 40.7,336.9 31.9,342.2 28.3,336.9 33.7,328.0 28.3,322.7 17.7,329.8 7.1,334.2 0.0,334.2" fill="#83d5eb"/>
<polygon points="0.0,741.9 14.1,744.3 28.3,741.9 37.7,751.4 56.6,746.6 58.9,763.1 56.6,774.9 47.1,782.0 63.6,786.7 77.8,791.4 89.6,803.2 96.7,812.7 89.6,819.7 80.2,833.9 70.7,848.0 63.6,855.1 66.0,866.9 75.4,881.0 94.3,895.2 103.7,909.3 113.2,923.4 122.6,942.3 132.0,958.8 136.7,972.0 141.4,998.9 0.0,998.9" fill="#83d5eb"/>
<polygon points="42.4,148.5 61.3,147.3 77.8,153.2 89.6,155.6 87.2,174.4 75.4,175.6 58.9,174.4 44.8,169.7" fill="#b8eecb"/>
<polygon points="47.1,5.9 58.9,3.5 56.6,9.4 48.3,11.8" fill="#b8eecb"/>
<polygon points="0.0,80.2 7.1,82.5 14.1,89.6 23.6,94.3 18.9,101.4 9.4,96.7 0.0,99.0" fill="#b8eecb"/>
<polygon points="33.0,815.0 47.1,817.4 47.1,824.4 44.8,829.2 56.6,833.9 63.6,852.7 61.3,855.1 54.2,838.6 42.4,833.9 35.4,826.8" fill="#cff5e0"/>
<polyline points="90.3,342.2 93.0,354.0 97.4,372.3" fill="none" stroke="#83d5eb" stroke-width="2.5"/>
<polyline points="58.9,734.9 75.4,732.5 94.3,734.9 117.9,744.3 132.0,758.4" fill="none" stroke="#9adcef" stroke-width="2"/>
<polygon points="58.0,734.0 68.0,731.0 83.0,731.0 95.0,735.0 91.0,741.0 73.0,742.0 59.0,740.0" fill="#83d5eb"/>
<polyline points="256.0,719.4 231.0,731.2 207.4,747.7 193.3,761.9" fill="none" stroke="#9adcef" stroke-width="1.6"/>
<polygon points="153.2,789.1 165.0,786.7 167.4,796.2 157.9,798.5" fill="#9adcef"/>
<polygon points="172.1,338.5 188.6,338.5 188.6,352.7 174.4,350.3" fill="#eeeedd"/>
<polyline points="0.0,49.5 68.4,49.5 84.9,30.6 99.0,0.0" fill="none" stroke="#5fbde0" stroke-width="0.8" stroke-dasharray="4,3"/>
<rect x="25.0" y="413.0" width="23.0" height="22.0" rx="3" fill="#fff"/><rect x="24.0" y="418.9" width="25.0" height="11.0" rx="2" fill="#6ba143"/><text x="28.5" y="422.9" font-size="8" fill="#fff">E50</text>
<rect x="220.0" y="411.0" width="24.0" height="21.0" rx="3" fill="#fff"/><rect x="219.0" y="416.7" width="26.0" height="10.5" rx="2" fill="#dd5b5b"/><text x="223.7" y="420.4" font-size="8" fill="#fff">A84</text>
<rect x="239.0" y="259.0" width="17.0" height="22.0" rx="3" fill="#fff"/><rect x="238.0" y="264.9" width="19.0" height="11.0" rx="2" fill="#dd5b5b"/><text x="241.4" y="268.9" font-size="8" fill="#fff">A84</text>
<rect x="221.0" y="492.0" width="24.0" height="22.0" rx="3" fill="#fff"/><rect x="220.0" y="497.9" width="26.0" height="11.0" rx="2" fill="#6ba143"/><text x="224.7" y="501.9" font-size="8" fill="#fff">E50</text>
<rect x="106.0" y="709.0" width="23.0" height="21.0" rx="3" fill="#fff"/><rect x="105.0" y="714.7" width="25.0" height="10.5" rx="2" fill="#6ba143"/><text x="109.5" y="718.5" font-size="8" fill="#fff">E60</text>
<rect x="151.0" y="705.0" width="18.0" height="21.0" rx="3" fill="#fff"/><rect x="150.0" y="710.7" width="20.0" height="10.5" rx="2" fill="#6ba143"/><text x="153.6" y="714.5" font-size="8" fill="#fff">E3</text>
<rect x="221.0" y="703.0" width="24.0" height="21.0" rx="3" fill="#fff"/><rect x="220.0" y="708.7" width="26.0" height="10.5" rx="2" fill="#dd5b5b"/><text x="224.7" y="712.5" font-size="8" fill="#fff">A11</text>
<rect x="218.0" y="840.0" width="24.0" height="21.0" rx="3" fill="#fff"/><rect x="217.0" y="845.7" width="26.0" height="10.5" rx="2" fill="#dd5b5b"/><text x="221.7" y="849.5" font-size="8" fill="#fff">A83</text>
<rect x="240.0" y="870.0" width="16.0" height="21.0" rx="3" fill="#fff"/><rect x="239.0" y="875.7" width="18.0" height="10.5" rx="2" fill="#dd5b5b"/><text x="242.2" y="879.5" font-size="8" fill="#fff">A87</text>
<text x="66.0" y="28.0" font-size="11.6" font-weight="400" fill="#3a3a3a" stroke="#fff" stroke-width="2.5" stroke-linejoin="round" paint-order="stroke">La Hague</text>
<circle cx="122.6" cy="23.6" r="2.1" fill="#fff" stroke="#444" stroke-width="1"/>
<text x="175.0" y="37.0" font-size="11.6" font-weight="400" fill="#3a3a3a" stroke="#fff" stroke-width="2.5" stroke-linejoin="round" paint-order="stroke">Cherbourg-en-Cotentin</text>
<circle cx="167.8" cy="33.0" r="2.1" fill="#fff" stroke="#444" stroke-width="1"/>
<text x="137.0" y="74.0" font-size="11.6" font-weight="400" fill="#3a3a3a" stroke="#fff" stroke-width="2.5" stroke-linejoin="round" paint-order="stroke">Les Pieux</text>
<circle cx="130.8" cy="70.0" r="2.1" fill="#fff" stroke="#444" stroke-width="1"/>
<text x="204.0" y="75.0" font-size="11.6" font-weight="400" fill="#3a3a3a" stroke="#fff" stroke-width="2.5" stroke-linejoin="round" paint-order="stroke">Valognes</text>
<circle cx="198.0" cy="70.7" r="2.1" fill="#fff" stroke="#444" stroke-width="1"/>
<text x="234.0" y="107.0" font-size="11.6" font-weight="400" fill="#3a3a3a" stroke="#fff" stroke-width="2.5" stroke-linejoin="round" paint-order="stroke">Saint-Lô</text>
<circle cx="228.7" cy="102.0" r="2.1" fill="#fff" stroke="#444" stroke-width="1"/>
<text x="-61.0" y="95.5" font-size="17" font-weight="700" fill="#111" stroke="#fff" stroke-width="2.5" stroke-linejoin="round" paint-order="stroke">Guernsey</text>
<text x="40.0" y="167.0" font-size="17" font-weight="700" fill="#111" stroke="#fff" stroke-width="2.5" stroke-linejoin="round" paint-order="stroke">Jersey</text>
<text x="209.8" y="215.0" font-size="11.6" font-weight="400" fill="#3a3a3a" stroke="#fff" stroke-width="2.5" stroke-linejoin="round" paint-order="stroke">Coutances</text>
<circle cx="203.9" cy="211.0" r="2.1" fill="#fff" stroke="#444" stroke-width="1"/>
<text x="179.2" y="280.0" font-size="11.6" font-weight="400" fill="#3a3a3a" stroke="#fff" stroke-width="2.5" stroke-linejoin="round" paint-order="stroke">Granville</text>
<circle cx="173.3" cy="276.0" r="2.1" fill="#fff" stroke="#444" stroke-width="1"/>
<text x="226.3" y="326.0" font-size="11.6" font-weight="400" fill="#3a3a3a" stroke="#fff" stroke-width="2.5" stroke-linejoin="round" paint-order="stroke">Avranches</text>
<circle cx="219.2" cy="322.0" r="2.1" fill="#fff" stroke="#444" stroke-width="1"/>
<text x="95.5" y="337.0" font-size="11.6" font-weight="400" fill="#3a3a3a" stroke="#fff" stroke-width="2.5" stroke-linejoin="round" paint-order="stroke">Saint-Malo</text>
<circle cx="88.9" cy="332.9" r="2.1" fill="#fff" stroke="#444" stroke-width="1"/>
<text x="-53.0" y="378.0" font-size="11.6" font-weight="400" fill="#3a3a3a" stroke="#fff" stroke-width="2.5" stroke-linejoin="round" paint-order="stroke">Saint-Brieuc</text>
<text x="89.6" y="395.0" font-size="11.6" font-weight="400" fill="#3a3a3a" stroke="#fff" stroke-width="2.5" stroke-linejoin="round" paint-order="stroke">Dinan</text>
<circle cx="82.5" cy="390.8" r="2.1" fill="#fff" stroke="#444" stroke-width="1"/>
<text x="164.0" y="497.4" font-size="12" font-weight="700" fill="#2a2d33" stroke="#fff" stroke-width="2.5" stroke-linejoin="round" paint-order="stroke">Rennes</text>
<text x="149.0" y="524.0" font-size="11.6" font-weight="400" fill="#3a3a3a" stroke="#fff" stroke-width="2.5" stroke-linejoin="round" paint-order="stroke">Bruz</text>
<circle cx="142.6" cy="519.8" r="2.1" fill="#fff" stroke="#444" stroke-width="1"/>
<text x="20.7" y="552.0" font-size="11.6" font-weight="400" fill="#3a3a3a" stroke="#fff" stroke-width="2.5" stroke-linejoin="round" paint-order="stroke">Ploërmel</text>
<circle cx="14.1" cy="547.8" r="2.1" fill="#fff" stroke="#444" stroke-width="1"/>
<text x="222.8" y="614.0" font-size="11.6" font-weight="400" fill="#3a3a3a" stroke="#fff" stroke-width="2.5" stroke-linejoin="round" paint-order="stroke">Châteaubriant</text>
<circle cx="216.9" cy="609.8" r="2.1" fill="#fff" stroke="#444" stroke-width="1"/>
<text x="82.5" y="634.0" font-size="11.6" font-weight="400" fill="#3a3a3a" stroke="#fff" stroke-width="2.5" stroke-linejoin="round" paint-order="stroke">Redon</text>
<circle cx="75.9" cy="629.9" r="2.1" fill="#fff" stroke="#444" stroke-width="1"/>
<text x="57.3" y="745.0" font-size="11.6" font-weight="400" fill="#3a3a3a" stroke="#fff" stroke-width="2.5" stroke-linejoin="round" paint-order="stroke">Saint-Nazaire</text>
<circle cx="50.0" cy="740.7" r="2.1" fill="#fff" stroke="#444" stroke-width="1"/>
<text x="189.5" y="764.7" font-size="17" font-weight="700" fill="#2a2d33" stroke="#fff" stroke-width="2.5" stroke-linejoin="round" paint-order="stroke">Nantes</text>
<circle cx="181.3" cy="757.3" r="3" fill="#fff" stroke="#444" stroke-width="1"/>
<text x="77.8" y="792.0" font-size="11.6" font-weight="400" fill="#3a3a3a" stroke="#fff" stroke-width="2.5" stroke-linejoin="round" paint-order="stroke">Pornic</text>
<circle cx="71.9" cy="787.9" r="2.1" fill="#fff" stroke="#444" stroke-width="1"/>
<text x="64.1" y="871.0" font-size="11.6" font-weight="400" fill="#3a3a3a" stroke="#fff" stroke-width="2.5" stroke-linejoin="round" paint-order="stroke">Challans</text>
<text x="87.2" y="886.0" font-size="11.6" font-weight="400" fill="#3a3a3a" stroke="#fff" stroke-width="2.5" stroke-linejoin="round" paint-order="stroke">Saint-Jean-de-Monts</text>
<circle cx="80.9" cy="881.7" r="2.1" fill="#fff" stroke="#444" stroke-width="1"/>
<text x="0.5" y="914.0" font-size="11.4" font-weight="400" fill="#3a3a3a" stroke="#fff" stroke-width="2.5" stroke-linejoin="round" paint-order="stroke">Gilles-Croix-de-Vie</text>
<text x="215.7" y="921.0" font-size="11.6" font-weight="400" fill="#3a3a3a" stroke="#fff" stroke-width="2.5" stroke-linejoin="round" paint-order="stroke">La Roche-sur-Yon</text>
<circle cx="208.6" cy="916.8" r="2.1" fill="#fff" stroke="#444" stroke-width="1"/>
<text x="23.6" y="971.0" font-size="11.6" font-weight="400" fill="#3a3a3a" stroke="#fff" stroke-width="2.5" stroke-linejoin="round" paint-order="stroke">Les Sables-d'Olonne</text>
<circle cx="136.7" cy="966.4" r="2.1" fill="#fff" stroke="#444" stroke-width="1"/>
<circle cx="117.2" cy="866.9" r="2.6" fill="#fff" stroke="#444" stroke-width="1"/>
<circle cx="103.7" cy="909.8" r="2.2" fill="#fff" stroke="#444" stroke-width="1"/>
<circle cx="8.3" cy="725.8" r="2.6" fill="#fff" stroke="#444" stroke-width="1"/>
<circle cx="250.0" cy="490.7" r="2.6" fill="#fff" stroke="#444" stroke-width="1"/>
<circle cx="251.0" cy="421.0" r="2.6" fill="#fff" stroke="#444" stroke-width="1"/>
<path d="M149.9,500.7 C148.0,494.9 137.2,484.6 137.2,477.6 A12.7,12.7 0 1 1 162.6,477.6 C162.6,484.6 151.8,494.9 149.9,500.7 Z" fill="#bda2da" stroke="#a88ccc" stroke-width="0.8"/>
<path d="M161.0,484.0 C159.3,478.7 149.4,469.3 149.4,462.9 A11.6,11.6 0 1 1 172.6,462.9 C172.6,469.3 162.7,478.7 161.0,484.0 Z" fill="#c6c6c6" stroke="#9e9e9e" stroke-width="0.8"/>
<path d="M172.4,491.1 C170.7,486.7 161.2,479.8 161.2,473.6 A11.2,11.2 0 1 1 183.6,473.6 C183.6,479.8 174.1,486.7 172.4,491.1 Z" fill="#c6c6c6" stroke="#9e9e9e" stroke-width="0.8"/>
<path d="M160.2,512.1 C158.3,506.4 147.5,496.1 147.5,489.1 A12.7,12.7 0 1 1 172.9,489.1 C172.9,496.1 162.1,506.4 160.2,512.1 Z" fill="#bda2da" stroke="#a88ccc" stroke-width="0.8"/>
<path d="M151.7,493.7 C149.8,487.9 139.0,477.5 139.0,470.5 A12.7,12.7 0 1 1 164.4,470.5 C164.4,477.5 153.6,487.9 151.7,493.7 Z" fill="#c6c6c6" stroke="#9e9e9e" stroke-width="0.8"/>
<rect x="221.5" y="9.3" width="24.8" height="24.9" rx="3" fill="#fff"/>
<path d="M236.3,17.5 L231.6,22.0 L236.3,26.5" fill="none" stroke="#222" stroke-width="1.5"/>
</svg>
</div>
<div id="card" class="abs">
<div class="t" style="left:16px;top:23.0px;font-size:13px;line-height:13px;color:#2a2a2a">Semaine 1</div>
<svg class="t" style="left:104px;top:20px" width="60" height="20" viewBox="420 135 60 20"><path d="M432.6 140.3 L428 145 L432.6 149.7" fill="none" stroke="#111" stroke-width="1.6"/><path d="M463.6 140.3 L468.2 145 L463.6 149.7" fill="none" stroke="#111" stroke-width="1.6"/></svg>
<div class="t" style="left:0;top:60px;width:1200px;height:1px;background:#d9d9d9"></div>
<div class="t" style="left:384px;top:105px;width:288px;height:1000px;background:#ebebeb"></div>
<div class="t" style="left:672px;top:61px;width:600px;height:43px;background:#f6f6f6"></div>
<div class="t" style="left:672px;top:105px;width:336px;height:68px;background:#f6f6f6"></div>
<div class="t" style="left:672px;top:174px;width:600px;height:1000px;background:#ebebeb"></div>
<div class="t" style="left:1008px;top:105px;width:300px;height:68px;background:#eaeaea"></div>
<div class="t" style="left:95px;top:61px;width:1px;height:1000px;background:#d6d6d6"></div>
<div class="t" style="left:96px;top:104px;width:1200px;height:1px;background:#d6d6d6"></div>
<div class="t" style="left:96px;top:173px;width:1200px;height:1px;background:#d6d6d6"></div>
<div class="t" style="left:184px;width:400px;text-align:center;top:66.8px;font-size:13px;line-height:13px;color:#222;font-weight:400;">Lundi</div>
<div class="t" style="left:184px;width:400px;text-align:center;top:85.6px;font-size:11px;line-height:11px;color:#a8a8a8;font-weight:400;letter-spacing:0.5px">29/12/2025</div>
<div class="t" style="left:783px;width:400px;text-align:center;top:66.8px;font-size:13px;line-height:13px;color:#222;font-weight:400;">Mardi</div>
<div class="t" style="left:783px;width:400px;text-align:center;top:85.6px;font-size:11px;line-height:11px;color:#a8a8a8;font-weight:400;letter-spacing:0.5px">30/12/2025</div>
<div class="t" style="left:40px;width:400px;text-align:center;top:133.6px;font-size:11px;line-height:11px;color:#2a2a2a;font-weight:400;letter-spacing:0.8px">Johann Connuel</div>
<div class="t" style="left:328px;width:400px;text-align:center;top:133.6px;font-size:11px;line-height:11px;color:#2a2a2a;font-weight:400;letter-spacing:0.8px">Matteo LaFrancesca</div>
<div class="t" style="left:640px;width:400px;text-align:center;top:133.6px;font-size:11px;line-height:11px;color:#2a2a2a;font-weight:400;letter-spacing:0.8px">Johann Connuel</div>
<div class="t" style="left:952px;width:400px;text-align:center;top:133.6px;font-size:11px;line-height:11px;color:#2a2a2a;font-weight:400;letter-spacing:0.8px">Matteo LaFrancesca</div>
<div class="t" style="left:-153px;width:400px;text-align:center;top:156.1px;font-size:12px;line-height:12px;color:#1a1a1a;font-weight:400;">10:00</div>
<div class="t" style="left:-153px;width:400px;text-align:center;top:268.1px;font-size:12px;line-height:12px;color:#1a1a1a;font-weight:400;">11:00</div>
<div class="t" style="left:-153px;width:400px;text-align:center;top:380.1px;font-size:12px;line-height:12px;color:#1a1a1a;font-weight:400;">12:00</div>
<div class="t" style="left:-153px;width:400px;text-align:center;top:492.1px;font-size:12px;line-height:12px;color:#1a1a1a;font-weight:400;">13:00</div>
<div class="t" style="left:-153px;width:400px;text-align:center;top:604.1px;font-size:12px;line-height:12px;color:#1a1a1a;font-weight:400;">14:00</div>
<div class="t" style="left:-153px;width:400px;text-align:center;top:716.1px;font-size:12px;line-height:12px;color:#1a1a1a;font-weight:400;">15:00</div>
<div class="t" style="left:-153px;width:400px;text-align:center;top:828.1px;font-size:12px;line-height:12px;color:#1a1a1a;font-weight:400;">16:00</div>
<div class="t" style="left:-153px;width:400px;text-align:center;top:940.1px;font-size:12px;line-height:12px;color:#1a1a1a;font-weight:400;">17:00</div>
<div class="t" style="left:-153px;width:400px;text-align:center;top:1052.1px;font-size:12px;line-height:12px;color:#1a1a1a;font-weight:400;">18:00</div>
<div class="t" style="left:0;top:174px;width:1200px;height:900px;overflow:hidden"><div style="position:absolute;left:0;top:-174px;width:1200px;height:1200px"><div class="ev" style="left:96px;top:601px;width:168px;height:112px"><div class="n">ENLEVER CODE SUR LES PLA...</div><div class="h">14:00-15:00</div></div><div class="ev p" style="left:96px;top:713px;width:168px;height:112px"><div class="n">PROBLEME INTERPHONE</div><div class="h">15:00-16:00</div></div><div class="ev" style="left:672px;top:153px;width:168px;height:112px"><div class="n"></div><div class="h">10:00-11:00</div></div><div class="ev p" style="left:672px;top:265px;width:168px;height:112px"><div class="n">PROBLEME BADGE ASCENSE...</div><div class="h">11:00-12:00</div></div><div class="ev" style="left:672px;top:601px;width:168px;height:112px"><div class="n">PROBLEME GACHE PORTILL...</div><div class="h">14:00-15:00</div></div><div class="ev" style="left:672px;top:713px;width:168px;height:112px"><div class="n" style="letter-spacing:0.8px">Probleme Porte local velo</div><div class="h">15:00-16:00</div></div><div class="ev" style="left:840px;top:713px;width:168px;height:112px"><div class="n">ARCHIPEL - PB BADGE A RE...</div><div class="h">15:00-16:00</div></div><div class="ev" style="left:672px;top:825px;width:168px;height:112px"><div class="n">ARCHIPEL - PB INTERPHONE...</div><div class="h">16:00-17:00</div></div></div></div>
</div>
</body></html>
